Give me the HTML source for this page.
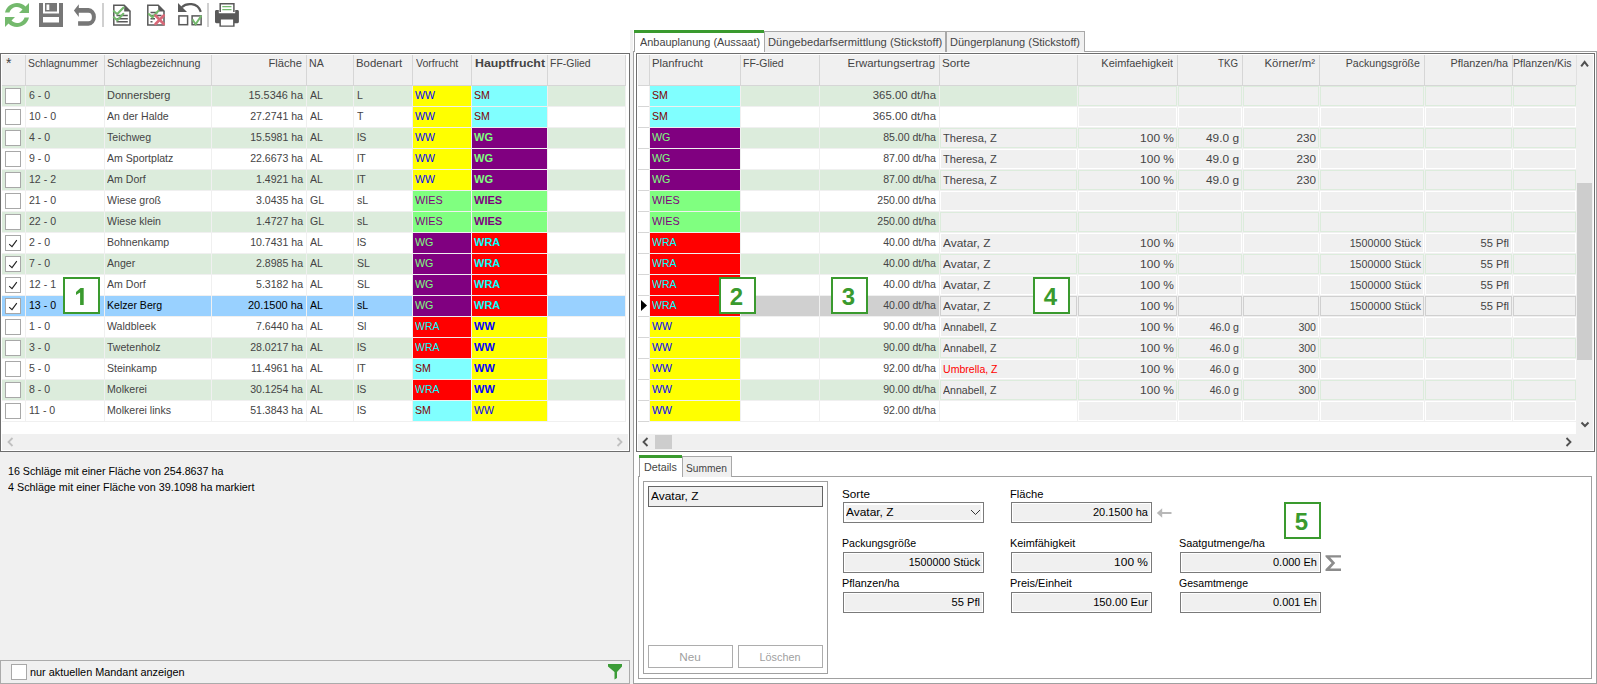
<!DOCTYPE html>
<html><head><meta charset="utf-8"><style>
html,body{margin:0;padding:0;}
body{width:1597px;height:684px;position:relative;overflow:hidden;background:#fff;font-family:"Liberation Sans",sans-serif;font-size:11px;}
body div{position:absolute;}
.t{white-space:pre;line-height:13px;font-size:11px;}
</style></head><body>
<svg style="position:absolute;left:0;top:0" width="260" height="32" viewBox="0 0 260 32">
<g fill="#74b96d">
<path d="M5 12.5 C6.5 6.5 11.5 3 17 3 C20.5 3 23.5 4.5 25.5 6.5 L29 3 L29 13 L19 13 L22.5 9.5 C21 8 19 7 17 7 C13.5 7 10.5 9 9.5 12.5 Z"/>
<path d="M29 17.5 C27.5 23.5 22.5 27 17 27 C13.5 27 10.5 25.5 8.5 23.5 L5 27 L5 17 L15 17 L11.5 20.5 C13 22 15 23 17 23 C20.5 23 23.5 21 24.5 17.5 Z"/>
</g>
<path fill="#777777" fill-rule="evenodd" d="M39 3 H63 V27 H39 Z M43 3 V13.5 H59 V3 Z M45 3 H57 V11.5 H45 Z M43 17 H59 V22.5 H43 Z"/>
<rect x="46.5" y="4.5" width="2.8" height="5.5" fill="#fff"/>
<path fill="#777777" d="M73.9 10.5 L78.8 4.2 L78.8 8.1 L88.5 8.1 A7.4 8.8 0 0 1 88.5 25.7 L78.1 25.7 L78.1 21.3 L88.4 21.3 A3.5 4.3 0 0 0 88.4 12.7 L78.8 12.7 L78.8 16.9 Z"/>
<rect x="102" y="3" width="2" height="24" fill="#d0d0d0"/>
<g fill="none" stroke="#595959" stroke-width="1.5">
<path d="M113.8 5.2 H124.2 L130 11 V25 H113.8 Z"/>
<path d="M116.5 15.4 H127.8 M116.5 18.7 H127.8 M116.5 21.7 H127.8"/>
<path d="M147.8 5.2 H158.2 L164 11 V25 H147.8 Z"/>
<path d="M150.5 12.6 H158 M150.5 15.4 H161.5 M150.5 18.7 H155 M150.5 21.7 H152.5"/>
</g>
<path fill="#595959" d="M124.2 5 L130.6 11.4 L124.2 11.4 Z M158.2 5 L164.6 11.4 L158.2 11.4 Z"/>
<g fill="none" stroke="#74b96d" stroke-width="2.1" stroke-linecap="round">
<path d="M113.8 11.2 L117.3 14 L123.5 7.5"/>
<path d="M113.8 17.3 L117.3 20.2 L123.3 13.8"/>
<path d="M148.8 14 L152.5 17.3 L158.5 10.8"/>
</g>
<path d="M155.5 15.5 L163.8 24 M155.5 24 L163.8 15.5" stroke="#d86878" stroke-width="2.6" stroke-linecap="round"/>
<path fill="#595959" d="M178 3 L178 12 L187 12 Z"/>
<path fill="none" stroke="#595959" stroke-width="2.2" d="M181.8 7.2 C186 3 197.5 1.8 200.8 11.8"/>
<rect x="178.9" y="15.9" width="8.7" height="8.8" fill="none" stroke="#595959" stroke-width="1.5"/>
<rect x="192.1" y="15.9" width="9" height="8.8" fill="none" stroke="#595959" stroke-width="1.5"/>
<path d="M192.4 19.4 L195.6 24.2 L201.4 15.6" fill="none" stroke="#74b96d" stroke-width="1.9"/>
<rect x="207" y="3" width="2" height="24" fill="#d0d0d0"/>
<path d="M220.2 12 V3.7 H233.9 V12" fill="#fff" stroke="#595959" stroke-width="1.5"/>
<path d="M222.3 6.6 H231.5 M222.3 9.7 H231.5" stroke="#74b96d" stroke-width="1.3"/>
<path fill="#595959" d="M216.5 10 H218.8 V13.3 H235.2 V10 H237.5 C238.3 10 238.9 10.6 238.9 11.5 V21.8 C238.9 22.6 238.3 23.2 237.5 23.2 H234 V19 H220 V23.2 H216.5 C215.6 23.2 215 22.6 215 21.8 V11.5 C215 10.6 215.6 10 216.5 10 Z"/>
<path fill="#595959" d="M219.4 18.6 H234.6 V26.8 H219.4 Z M220.9 19.6 V25.4 H233.1 V19.6 Z" fill-rule="evenodd"/>
</svg>
<div style="left:0px;top:452px;width:633px;height:232px;background:#f0f0f0"></div>
<div style="left:630px;top:30px;width:3px;height:654px;background:#f0f0f0"></div>
<div style="left:0px;top:53px;width:630px;height:399px;border:1px solid #6e6e6e;box-sizing:border-box;background:#fff"></div>
<div style="left:2px;top:55px;width:624px;height:30px;background:#f0f0f0"></div>
<div style="left:2px;top:85px;width:624px;height:1px;background:#d6d6d6"></div>
<div style="left:25px;top:55px;width:1px;height:30px;background:#d6d6d6"></div>
<div style="left:104px;top:55px;width:1px;height:30px;background:#d6d6d6"></div>
<div style="left:211px;top:55px;width:1px;height:30px;background:#d6d6d6"></div>
<div style="left:306px;top:55px;width:1px;height:30px;background:#d6d6d6"></div>
<div style="left:353px;top:55px;width:1px;height:30px;background:#d6d6d6"></div>
<div style="left:412px;top:55px;width:1px;height:30px;background:#d6d6d6"></div>
<div style="left:471px;top:55px;width:1px;height:30px;background:#d6d6d6"></div>
<div style="left:547px;top:55px;width:1px;height:30px;background:#d6d6d6"></div>
<div style="left:625px;top:55px;width:1px;height:30px;background:#d6d6d6"></div>
<div class="t" style="left:6px;top:57px;color:#444444;font-size:14px">*</div>
<div class="t" style="left:28px;top:57px;transform:scaleX(0.9444);transform-origin:left top;color:#444444">Schlagnummer</div>
<div class="t" style="left:107px;top:57px;transform:scaleX(0.9734);transform-origin:left top;color:#444444">Schlagbezeichnung</div>
<div class="t" style="left:2px;top:57px;width:300px;text-align:right;transform:scaleX(1.0161);transform-origin:right top;color:#444444">Fläche</div>
<div class="t" style="left:309px;top:57px;transform:scaleX(0.9600);transform-origin:left top;color:#444444">NA</div>
<div class="t" style="left:356px;top:57px;transform:scaleX(1.0349);transform-origin:left top;color:#444444">Bodenart</div>
<div class="t" style="left:416px;top:57px;transform:scaleX(0.9600);transform-origin:left top;color:#444444">Vorfrucht</div>
<div class="t" style="left:475px;top:57px;transform:scaleX(1.1230);transform-origin:left top;color:#444444;font-weight:bold">Hauptfrucht</div>
<div class="t" style="left:550px;top:57px;transform:scaleX(0.9512);transform-origin:left top;color:#444444">FF-Glied</div>
<div style="left:2px;top:86px;width:623px;height:20px;background:#dcecdc"></div>
<div style="left:2px;top:106px;width:624px;height:1px;background:#f0f0f0"></div>
<div style="left:25px;top:86px;width:1px;height:21px;background:#f0f0f0"></div>
<div style="left:104px;top:86px;width:1px;height:21px;background:#f0f0f0"></div>
<div style="left:211px;top:86px;width:1px;height:21px;background:#f0f0f0"></div>
<div style="left:306px;top:86px;width:1px;height:21px;background:#f0f0f0"></div>
<div style="left:353px;top:86px;width:1px;height:21px;background:#f0f0f0"></div>
<div style="left:412px;top:86px;width:1px;height:21px;background:#f0f0f0"></div>
<div style="left:471px;top:86px;width:1px;height:21px;background:#f0f0f0"></div>
<div style="left:547px;top:86px;width:1px;height:21px;background:#f0f0f0"></div>
<div style="left:625px;top:86px;width:1px;height:21px;background:#f0f0f0"></div>
<div style="left:5px;top:88px;width:16px;height:16px;border:1px solid #a8a8a8;box-sizing:border-box;background:#fff"></div>
<div class="t" style="left:29px;top:89px;transform:scaleX(0.9600);transform-origin:left top;color:#444444">6 - 0</div>
<div class="t" style="left:107px;top:89px;transform:scaleX(0.9952);transform-origin:left top;color:#444444">Donnersberg</div>
<div class="t" style="left:3px;top:89px;width:300px;text-align:right;transform:scaleX(0.9907);transform-origin:right top;color:#444444">15.5346 ha</div>
<div class="t" style="left:310px;top:89px;transform:scaleX(0.9600);transform-origin:left top;color:#444444">AL</div>
<div class="t" style="left:357px;top:89px;transform:scaleX(0.9600);transform-origin:left top;color:#444444">L</div>
<div style="left:413px;top:86px;width:58px;height:20px;background:#ffff00"></div>
<div class="t" style="left:415px;top:89px;transform:scaleX(0.9600);transform-origin:left top;color:#0000ff">WW</div>
<div style="left:472px;top:86px;width:75px;height:20px;background:#80ffff"></div>
<div class="t" style="left:474px;top:89px;transform:scaleX(0.9600);transform-origin:left top;color:#7f0000;">SM</div>
<div style="left:2px;top:107px;width:623px;height:20px;background:#ffffff"></div>
<div style="left:2px;top:127px;width:624px;height:1px;background:#f0f0f0"></div>
<div style="left:25px;top:107px;width:1px;height:21px;background:#f0f0f0"></div>
<div style="left:104px;top:107px;width:1px;height:21px;background:#f0f0f0"></div>
<div style="left:211px;top:107px;width:1px;height:21px;background:#f0f0f0"></div>
<div style="left:306px;top:107px;width:1px;height:21px;background:#f0f0f0"></div>
<div style="left:353px;top:107px;width:1px;height:21px;background:#f0f0f0"></div>
<div style="left:412px;top:107px;width:1px;height:21px;background:#f0f0f0"></div>
<div style="left:471px;top:107px;width:1px;height:21px;background:#f0f0f0"></div>
<div style="left:547px;top:107px;width:1px;height:21px;background:#f0f0f0"></div>
<div style="left:625px;top:107px;width:1px;height:21px;background:#f0f0f0"></div>
<div style="left:5px;top:109px;width:16px;height:16px;border:1px solid #a8a8a8;box-sizing:border-box;background:#fff"></div>
<div class="t" style="left:29px;top:110px;transform:scaleX(0.9600);transform-origin:left top;color:#444444">10 - 0</div>
<div class="t" style="left:107px;top:110px;transform:scaleX(0.9600);transform-origin:left top;color:#444444">An der Halde</div>
<div class="t" style="left:3px;top:110px;width:300px;text-align:right;transform:scaleX(0.9600);transform-origin:right top;color:#444444">27.2741 ha</div>
<div class="t" style="left:310px;top:110px;transform:scaleX(0.9600);transform-origin:left top;color:#444444">AL</div>
<div class="t" style="left:357px;top:110px;transform:scaleX(0.9600);transform-origin:left top;color:#444444">T</div>
<div style="left:413px;top:107px;width:58px;height:20px;background:#ffff00"></div>
<div class="t" style="left:415px;top:110px;transform:scaleX(0.9600);transform-origin:left top;color:#0000ff">WW</div>
<div style="left:472px;top:107px;width:75px;height:20px;background:#80ffff"></div>
<div class="t" style="left:474px;top:110px;transform:scaleX(0.9600);transform-origin:left top;color:#7f0000;">SM</div>
<div style="left:2px;top:128px;width:623px;height:20px;background:#dcecdc"></div>
<div style="left:2px;top:148px;width:624px;height:1px;background:#f0f0f0"></div>
<div style="left:25px;top:128px;width:1px;height:21px;background:#f0f0f0"></div>
<div style="left:104px;top:128px;width:1px;height:21px;background:#f0f0f0"></div>
<div style="left:211px;top:128px;width:1px;height:21px;background:#f0f0f0"></div>
<div style="left:306px;top:128px;width:1px;height:21px;background:#f0f0f0"></div>
<div style="left:353px;top:128px;width:1px;height:21px;background:#f0f0f0"></div>
<div style="left:412px;top:128px;width:1px;height:21px;background:#f0f0f0"></div>
<div style="left:471px;top:128px;width:1px;height:21px;background:#f0f0f0"></div>
<div style="left:547px;top:128px;width:1px;height:21px;background:#f0f0f0"></div>
<div style="left:625px;top:128px;width:1px;height:21px;background:#f0f0f0"></div>
<div style="left:5px;top:130px;width:16px;height:16px;border:1px solid #a8a8a8;box-sizing:border-box;background:#fff"></div>
<div class="t" style="left:29px;top:131px;transform:scaleX(0.9600);transform-origin:left top;color:#444444">4 - 0</div>
<div class="t" style="left:107px;top:131px;transform:scaleX(0.9600);transform-origin:left top;color:#444444">Teichweg</div>
<div class="t" style="left:3px;top:131px;width:300px;text-align:right;transform:scaleX(0.9600);transform-origin:right top;color:#444444">15.5981 ha</div>
<div class="t" style="left:310px;top:131px;transform:scaleX(0.9600);transform-origin:left top;color:#444444">AL</div>
<div class="t" style="left:357px;top:131px;transform:scaleX(0.9600);transform-origin:left top;color:#444444">lS</div>
<div style="left:413px;top:128px;width:58px;height:20px;background:#ffff00"></div>
<div class="t" style="left:415px;top:131px;transform:scaleX(0.9600);transform-origin:left top;color:#0000ff">WW</div>
<div style="left:472px;top:128px;width:75px;height:20px;background:#800080"></div>
<div class="t" style="left:474px;top:131px;color:#7fff7f;font-weight:bold">WG</div>
<div style="left:2px;top:149px;width:623px;height:20px;background:#ffffff"></div>
<div style="left:2px;top:169px;width:624px;height:1px;background:#f0f0f0"></div>
<div style="left:25px;top:149px;width:1px;height:21px;background:#f0f0f0"></div>
<div style="left:104px;top:149px;width:1px;height:21px;background:#f0f0f0"></div>
<div style="left:211px;top:149px;width:1px;height:21px;background:#f0f0f0"></div>
<div style="left:306px;top:149px;width:1px;height:21px;background:#f0f0f0"></div>
<div style="left:353px;top:149px;width:1px;height:21px;background:#f0f0f0"></div>
<div style="left:412px;top:149px;width:1px;height:21px;background:#f0f0f0"></div>
<div style="left:471px;top:149px;width:1px;height:21px;background:#f0f0f0"></div>
<div style="left:547px;top:149px;width:1px;height:21px;background:#f0f0f0"></div>
<div style="left:625px;top:149px;width:1px;height:21px;background:#f0f0f0"></div>
<div style="left:5px;top:151px;width:16px;height:16px;border:1px solid #a8a8a8;box-sizing:border-box;background:#fff"></div>
<div class="t" style="left:29px;top:152px;transform:scaleX(0.9600);transform-origin:left top;color:#444444">9 - 0</div>
<div class="t" style="left:107px;top:152px;transform:scaleX(0.9600);transform-origin:left top;color:#444444">Am Sportplatz</div>
<div class="t" style="left:3px;top:152px;width:300px;text-align:right;transform:scaleX(0.9600);transform-origin:right top;color:#444444">22.6673 ha</div>
<div class="t" style="left:310px;top:152px;transform:scaleX(0.9600);transform-origin:left top;color:#444444">AL</div>
<div class="t" style="left:357px;top:152px;transform:scaleX(0.9600);transform-origin:left top;color:#444444">lT</div>
<div style="left:413px;top:149px;width:58px;height:20px;background:#ffff00"></div>
<div class="t" style="left:415px;top:152px;transform:scaleX(0.9600);transform-origin:left top;color:#0000ff">WW</div>
<div style="left:472px;top:149px;width:75px;height:20px;background:#800080"></div>
<div class="t" style="left:474px;top:152px;color:#7fff7f;font-weight:bold">WG</div>
<div style="left:2px;top:170px;width:623px;height:20px;background:#dcecdc"></div>
<div style="left:2px;top:190px;width:624px;height:1px;background:#f0f0f0"></div>
<div style="left:25px;top:170px;width:1px;height:21px;background:#f0f0f0"></div>
<div style="left:104px;top:170px;width:1px;height:21px;background:#f0f0f0"></div>
<div style="left:211px;top:170px;width:1px;height:21px;background:#f0f0f0"></div>
<div style="left:306px;top:170px;width:1px;height:21px;background:#f0f0f0"></div>
<div style="left:353px;top:170px;width:1px;height:21px;background:#f0f0f0"></div>
<div style="left:412px;top:170px;width:1px;height:21px;background:#f0f0f0"></div>
<div style="left:471px;top:170px;width:1px;height:21px;background:#f0f0f0"></div>
<div style="left:547px;top:170px;width:1px;height:21px;background:#f0f0f0"></div>
<div style="left:625px;top:170px;width:1px;height:21px;background:#f0f0f0"></div>
<div style="left:5px;top:172px;width:16px;height:16px;border:1px solid #a8a8a8;box-sizing:border-box;background:#fff"></div>
<div class="t" style="left:29px;top:173px;transform:scaleX(0.9600);transform-origin:left top;color:#444444">12 - 2</div>
<div class="t" style="left:107px;top:173px;transform:scaleX(0.9600);transform-origin:left top;color:#444444">Am Dorf</div>
<div class="t" style="left:3px;top:173px;width:300px;text-align:right;transform:scaleX(0.9600);transform-origin:right top;color:#444444">1.4921 ha</div>
<div class="t" style="left:310px;top:173px;transform:scaleX(0.9600);transform-origin:left top;color:#444444">AL</div>
<div class="t" style="left:357px;top:173px;transform:scaleX(0.9600);transform-origin:left top;color:#444444">lT</div>
<div style="left:413px;top:170px;width:58px;height:20px;background:#ffff00"></div>
<div class="t" style="left:415px;top:173px;transform:scaleX(0.9600);transform-origin:left top;color:#0000ff">WW</div>
<div style="left:472px;top:170px;width:75px;height:20px;background:#800080"></div>
<div class="t" style="left:474px;top:173px;color:#7fff7f;font-weight:bold">WG</div>
<div style="left:2px;top:191px;width:623px;height:20px;background:#ffffff"></div>
<div style="left:2px;top:211px;width:624px;height:1px;background:#f0f0f0"></div>
<div style="left:25px;top:191px;width:1px;height:21px;background:#f0f0f0"></div>
<div style="left:104px;top:191px;width:1px;height:21px;background:#f0f0f0"></div>
<div style="left:211px;top:191px;width:1px;height:21px;background:#f0f0f0"></div>
<div style="left:306px;top:191px;width:1px;height:21px;background:#f0f0f0"></div>
<div style="left:353px;top:191px;width:1px;height:21px;background:#f0f0f0"></div>
<div style="left:412px;top:191px;width:1px;height:21px;background:#f0f0f0"></div>
<div style="left:471px;top:191px;width:1px;height:21px;background:#f0f0f0"></div>
<div style="left:547px;top:191px;width:1px;height:21px;background:#f0f0f0"></div>
<div style="left:625px;top:191px;width:1px;height:21px;background:#f0f0f0"></div>
<div style="left:5px;top:193px;width:16px;height:16px;border:1px solid #a8a8a8;box-sizing:border-box;background:#fff"></div>
<div class="t" style="left:29px;top:194px;transform:scaleX(0.9600);transform-origin:left top;color:#444444">21 - 0</div>
<div class="t" style="left:107px;top:194px;transform:scaleX(0.9600);transform-origin:left top;color:#444444">Wiese groß</div>
<div class="t" style="left:3px;top:194px;width:300px;text-align:right;transform:scaleX(0.9600);transform-origin:right top;color:#444444">3.0435 ha</div>
<div class="t" style="left:310px;top:194px;transform:scaleX(0.9600);transform-origin:left top;color:#444444">GL</div>
<div class="t" style="left:357px;top:194px;transform:scaleX(0.9600);transform-origin:left top;color:#444444">sL</div>
<div style="left:413px;top:191px;width:58px;height:20px;background:#80ff80"></div>
<div class="t" style="left:415px;top:194px;transform:scaleX(0.9808);transform-origin:left top;color:#7f007f">WIES</div>
<div style="left:472px;top:191px;width:75px;height:20px;background:#80ff80"></div>
<div class="t" style="left:474px;top:194px;color:#7f007f;font-weight:bold">WIES</div>
<div style="left:2px;top:212px;width:623px;height:20px;background:#dcecdc"></div>
<div style="left:2px;top:232px;width:624px;height:1px;background:#f0f0f0"></div>
<div style="left:25px;top:212px;width:1px;height:21px;background:#f0f0f0"></div>
<div style="left:104px;top:212px;width:1px;height:21px;background:#f0f0f0"></div>
<div style="left:211px;top:212px;width:1px;height:21px;background:#f0f0f0"></div>
<div style="left:306px;top:212px;width:1px;height:21px;background:#f0f0f0"></div>
<div style="left:353px;top:212px;width:1px;height:21px;background:#f0f0f0"></div>
<div style="left:412px;top:212px;width:1px;height:21px;background:#f0f0f0"></div>
<div style="left:471px;top:212px;width:1px;height:21px;background:#f0f0f0"></div>
<div style="left:547px;top:212px;width:1px;height:21px;background:#f0f0f0"></div>
<div style="left:625px;top:212px;width:1px;height:21px;background:#f0f0f0"></div>
<div style="left:5px;top:214px;width:16px;height:16px;border:1px solid #a8a8a8;box-sizing:border-box;background:#fff"></div>
<div class="t" style="left:29px;top:215px;transform:scaleX(0.9600);transform-origin:left top;color:#444444">22 - 0</div>
<div class="t" style="left:107px;top:215px;transform:scaleX(0.9600);transform-origin:left top;color:#444444">Wiese klein</div>
<div class="t" style="left:3px;top:215px;width:300px;text-align:right;transform:scaleX(0.9600);transform-origin:right top;color:#444444">1.4727 ha</div>
<div class="t" style="left:310px;top:215px;transform:scaleX(0.9600);transform-origin:left top;color:#444444">GL</div>
<div class="t" style="left:357px;top:215px;transform:scaleX(0.9600);transform-origin:left top;color:#444444">sL</div>
<div style="left:413px;top:212px;width:58px;height:20px;background:#80ff80"></div>
<div class="t" style="left:415px;top:215px;transform:scaleX(0.9808);transform-origin:left top;color:#7f007f">WIES</div>
<div style="left:472px;top:212px;width:75px;height:20px;background:#80ff80"></div>
<div class="t" style="left:474px;top:215px;color:#7f007f;font-weight:bold">WIES</div>
<div style="left:2px;top:233px;width:623px;height:20px;background:#ffffff"></div>
<div style="left:2px;top:253px;width:624px;height:1px;background:#f0f0f0"></div>
<div style="left:25px;top:233px;width:1px;height:21px;background:#f0f0f0"></div>
<div style="left:104px;top:233px;width:1px;height:21px;background:#f0f0f0"></div>
<div style="left:211px;top:233px;width:1px;height:21px;background:#f0f0f0"></div>
<div style="left:306px;top:233px;width:1px;height:21px;background:#f0f0f0"></div>
<div style="left:353px;top:233px;width:1px;height:21px;background:#f0f0f0"></div>
<div style="left:412px;top:233px;width:1px;height:21px;background:#f0f0f0"></div>
<div style="left:471px;top:233px;width:1px;height:21px;background:#f0f0f0"></div>
<div style="left:547px;top:233px;width:1px;height:21px;background:#f0f0f0"></div>
<div style="left:625px;top:233px;width:1px;height:21px;background:#f0f0f0"></div>
<div style="left:5px;top:235px;width:16px;height:16px;border:1px solid #a8a8a8;box-sizing:border-box;background:#fff"></div>
<svg style="position:absolute;left:5px;top:235px" width="16" height="16"><path d="M4.2 9.2 L7 11.6 L11.8 5.2" fill="none" stroke="#222" stroke-width="1.1"/></svg>
<div class="t" style="left:29px;top:236px;transform:scaleX(0.9600);transform-origin:left top;color:#444444">2 - 0</div>
<div class="t" style="left:107px;top:236px;transform:scaleX(0.9600);transform-origin:left top;color:#444444">Bohnenkamp</div>
<div class="t" style="left:3px;top:236px;width:300px;text-align:right;transform:scaleX(0.9600);transform-origin:right top;color:#444444">10.7431 ha</div>
<div class="t" style="left:310px;top:236px;transform:scaleX(0.9600);transform-origin:left top;color:#444444">AL</div>
<div class="t" style="left:357px;top:236px;transform:scaleX(0.9600);transform-origin:left top;color:#444444">lS</div>
<div style="left:413px;top:233px;width:58px;height:20px;background:#800080"></div>
<div class="t" style="left:415px;top:236px;transform:scaleX(0.9706);transform-origin:left top;color:#7fff7f">WG</div>
<div style="left:472px;top:233px;width:75px;height:20px;background:#ff0000"></div>
<div class="t" style="left:474px;top:236px;color:#00ffff;font-weight:bold">WRA</div>
<div style="left:2px;top:254px;width:623px;height:20px;background:#dcecdc"></div>
<div style="left:2px;top:274px;width:624px;height:1px;background:#f0f0f0"></div>
<div style="left:25px;top:254px;width:1px;height:21px;background:#f0f0f0"></div>
<div style="left:104px;top:254px;width:1px;height:21px;background:#f0f0f0"></div>
<div style="left:211px;top:254px;width:1px;height:21px;background:#f0f0f0"></div>
<div style="left:306px;top:254px;width:1px;height:21px;background:#f0f0f0"></div>
<div style="left:353px;top:254px;width:1px;height:21px;background:#f0f0f0"></div>
<div style="left:412px;top:254px;width:1px;height:21px;background:#f0f0f0"></div>
<div style="left:471px;top:254px;width:1px;height:21px;background:#f0f0f0"></div>
<div style="left:547px;top:254px;width:1px;height:21px;background:#f0f0f0"></div>
<div style="left:625px;top:254px;width:1px;height:21px;background:#f0f0f0"></div>
<div style="left:5px;top:256px;width:16px;height:16px;border:1px solid #a8a8a8;box-sizing:border-box;background:#fff"></div>
<svg style="position:absolute;left:5px;top:256px" width="16" height="16"><path d="M4.2 9.2 L7 11.6 L11.8 5.2" fill="none" stroke="#222" stroke-width="1.1"/></svg>
<div class="t" style="left:29px;top:257px;transform:scaleX(0.9600);transform-origin:left top;color:#444444">7 - 0</div>
<div class="t" style="left:107px;top:257px;transform:scaleX(0.9600);transform-origin:left top;color:#444444">Anger</div>
<div class="t" style="left:3px;top:257px;width:300px;text-align:right;transform:scaleX(0.9600);transform-origin:right top;color:#444444">2.8985 ha</div>
<div class="t" style="left:310px;top:257px;transform:scaleX(0.9600);transform-origin:left top;color:#444444">AL</div>
<div class="t" style="left:357px;top:257px;transform:scaleX(0.9600);transform-origin:left top;color:#444444">SL</div>
<div style="left:413px;top:254px;width:58px;height:20px;background:#800080"></div>
<div class="t" style="left:415px;top:257px;transform:scaleX(0.9706);transform-origin:left top;color:#7fff7f">WG</div>
<div style="left:472px;top:254px;width:75px;height:20px;background:#ff0000"></div>
<div class="t" style="left:474px;top:257px;color:#00ffff;font-weight:bold">WRA</div>
<div style="left:2px;top:275px;width:623px;height:20px;background:#ffffff"></div>
<div style="left:2px;top:295px;width:624px;height:1px;background:#f0f0f0"></div>
<div style="left:25px;top:275px;width:1px;height:21px;background:#f0f0f0"></div>
<div style="left:104px;top:275px;width:1px;height:21px;background:#f0f0f0"></div>
<div style="left:211px;top:275px;width:1px;height:21px;background:#f0f0f0"></div>
<div style="left:306px;top:275px;width:1px;height:21px;background:#f0f0f0"></div>
<div style="left:353px;top:275px;width:1px;height:21px;background:#f0f0f0"></div>
<div style="left:412px;top:275px;width:1px;height:21px;background:#f0f0f0"></div>
<div style="left:471px;top:275px;width:1px;height:21px;background:#f0f0f0"></div>
<div style="left:547px;top:275px;width:1px;height:21px;background:#f0f0f0"></div>
<div style="left:625px;top:275px;width:1px;height:21px;background:#f0f0f0"></div>
<div style="left:5px;top:277px;width:16px;height:16px;border:1px solid #a8a8a8;box-sizing:border-box;background:#fff"></div>
<svg style="position:absolute;left:5px;top:277px" width="16" height="16"><path d="M4.2 9.2 L7 11.6 L11.8 5.2" fill="none" stroke="#222" stroke-width="1.1"/></svg>
<div class="t" style="left:29px;top:278px;transform:scaleX(0.9600);transform-origin:left top;color:#444444">12 - 1</div>
<div class="t" style="left:107px;top:278px;transform:scaleX(0.9600);transform-origin:left top;color:#444444">Am Dorf</div>
<div class="t" style="left:3px;top:278px;width:300px;text-align:right;transform:scaleX(0.9600);transform-origin:right top;color:#444444">5.3182 ha</div>
<div class="t" style="left:310px;top:278px;transform:scaleX(0.9600);transform-origin:left top;color:#444444">AL</div>
<div class="t" style="left:357px;top:278px;transform:scaleX(0.9600);transform-origin:left top;color:#444444">SL</div>
<div style="left:413px;top:275px;width:58px;height:20px;background:#800080"></div>
<div class="t" style="left:415px;top:278px;transform:scaleX(0.9706);transform-origin:left top;color:#7fff7f">WG</div>
<div style="left:472px;top:275px;width:75px;height:20px;background:#ff0000"></div>
<div class="t" style="left:474px;top:278px;color:#00ffff;font-weight:bold">WRA</div>
<div style="left:2px;top:296px;width:623px;height:20px;background:#99d1ff"></div>
<div style="left:2px;top:316px;width:624px;height:1px;background:#f0f0f0"></div>
<div style="left:25px;top:296px;width:1px;height:21px;background:#f0f0f0"></div>
<div style="left:104px;top:296px;width:1px;height:21px;background:#f0f0f0"></div>
<div style="left:211px;top:296px;width:1px;height:21px;background:#f0f0f0"></div>
<div style="left:306px;top:296px;width:1px;height:21px;background:#f0f0f0"></div>
<div style="left:353px;top:296px;width:1px;height:21px;background:#f0f0f0"></div>
<div style="left:412px;top:296px;width:1px;height:21px;background:#f0f0f0"></div>
<div style="left:471px;top:296px;width:1px;height:21px;background:#f0f0f0"></div>
<div style="left:547px;top:296px;width:1px;height:21px;background:#f0f0f0"></div>
<div style="left:625px;top:296px;width:1px;height:21px;background:#f0f0f0"></div>
<div style="left:5px;top:298px;width:16px;height:16px;border:1px solid #a8a8a8;box-sizing:border-box;background:#fff"></div>
<svg style="position:absolute;left:5px;top:298px" width="16" height="16"><path d="M4.2 9.2 L7 11.6 L11.8 5.2" fill="none" stroke="#222" stroke-width="1.1"/></svg>
<div class="t" style="left:29px;top:299px;transform:scaleX(0.9600);transform-origin:left top;color:#000">13 - 0</div>
<div class="t" style="left:107px;top:299px;transform:scaleX(0.9600);transform-origin:left top;color:#000">Kelzer Berg</div>
<div class="t" style="left:3px;top:299px;width:300px;text-align:right;color:#000">20.1500 ha</div>
<div class="t" style="left:310px;top:299px;transform:scaleX(0.9600);transform-origin:left top;color:#000">AL</div>
<div class="t" style="left:357px;top:299px;transform:scaleX(0.9600);transform-origin:left top;color:#000">sL</div>
<div style="left:413px;top:296px;width:58px;height:20px;background:#800080"></div>
<div class="t" style="left:415px;top:299px;transform:scaleX(0.9706);transform-origin:left top;color:#7fff7f">WG</div>
<div style="left:472px;top:296px;width:75px;height:20px;background:#ff0000"></div>
<div class="t" style="left:474px;top:299px;color:#00ffff;font-weight:bold">WRA</div>
<div style="left:2px;top:317px;width:623px;height:20px;background:#ffffff"></div>
<div style="left:2px;top:337px;width:624px;height:1px;background:#f0f0f0"></div>
<div style="left:25px;top:317px;width:1px;height:21px;background:#f0f0f0"></div>
<div style="left:104px;top:317px;width:1px;height:21px;background:#f0f0f0"></div>
<div style="left:211px;top:317px;width:1px;height:21px;background:#f0f0f0"></div>
<div style="left:306px;top:317px;width:1px;height:21px;background:#f0f0f0"></div>
<div style="left:353px;top:317px;width:1px;height:21px;background:#f0f0f0"></div>
<div style="left:412px;top:317px;width:1px;height:21px;background:#f0f0f0"></div>
<div style="left:471px;top:317px;width:1px;height:21px;background:#f0f0f0"></div>
<div style="left:547px;top:317px;width:1px;height:21px;background:#f0f0f0"></div>
<div style="left:625px;top:317px;width:1px;height:21px;background:#f0f0f0"></div>
<div style="left:5px;top:319px;width:16px;height:16px;border:1px solid #a8a8a8;box-sizing:border-box;background:#fff"></div>
<div class="t" style="left:29px;top:320px;transform:scaleX(0.9600);transform-origin:left top;color:#444444">1 - 0</div>
<div class="t" style="left:107px;top:320px;transform:scaleX(0.9600);transform-origin:left top;color:#444444">Waldbleek</div>
<div class="t" style="left:3px;top:320px;width:300px;text-align:right;transform:scaleX(0.9600);transform-origin:right top;color:#444444">7.6440 ha</div>
<div class="t" style="left:310px;top:320px;transform:scaleX(0.9600);transform-origin:left top;color:#444444">AL</div>
<div class="t" style="left:357px;top:320px;transform:scaleX(0.9600);transform-origin:left top;color:#444444">Sl</div>
<div style="left:413px;top:317px;width:58px;height:20px;background:#ff0000"></div>
<div class="t" style="left:415px;top:320px;transform:scaleX(0.9600);transform-origin:left top;color:#00ffff">WRA</div>
<div style="left:472px;top:317px;width:75px;height:20px;background:#ffff00"></div>
<div class="t" style="left:474px;top:320px;color:#0000ff;font-weight:bold">WW</div>
<div style="left:2px;top:338px;width:623px;height:20px;background:#dcecdc"></div>
<div style="left:2px;top:358px;width:624px;height:1px;background:#f0f0f0"></div>
<div style="left:25px;top:338px;width:1px;height:21px;background:#f0f0f0"></div>
<div style="left:104px;top:338px;width:1px;height:21px;background:#f0f0f0"></div>
<div style="left:211px;top:338px;width:1px;height:21px;background:#f0f0f0"></div>
<div style="left:306px;top:338px;width:1px;height:21px;background:#f0f0f0"></div>
<div style="left:353px;top:338px;width:1px;height:21px;background:#f0f0f0"></div>
<div style="left:412px;top:338px;width:1px;height:21px;background:#f0f0f0"></div>
<div style="left:471px;top:338px;width:1px;height:21px;background:#f0f0f0"></div>
<div style="left:547px;top:338px;width:1px;height:21px;background:#f0f0f0"></div>
<div style="left:625px;top:338px;width:1px;height:21px;background:#f0f0f0"></div>
<div style="left:5px;top:340px;width:16px;height:16px;border:1px solid #a8a8a8;box-sizing:border-box;background:#fff"></div>
<div class="t" style="left:29px;top:341px;transform:scaleX(0.9600);transform-origin:left top;color:#444444">3 - 0</div>
<div class="t" style="left:107px;top:341px;transform:scaleX(0.9600);transform-origin:left top;color:#444444">Twetenholz</div>
<div class="t" style="left:3px;top:341px;width:300px;text-align:right;transform:scaleX(0.9600);transform-origin:right top;color:#444444">28.0217 ha</div>
<div class="t" style="left:310px;top:341px;transform:scaleX(0.9600);transform-origin:left top;color:#444444">AL</div>
<div class="t" style="left:357px;top:341px;transform:scaleX(0.9600);transform-origin:left top;color:#444444">lS</div>
<div style="left:413px;top:338px;width:58px;height:20px;background:#ff0000"></div>
<div class="t" style="left:415px;top:341px;transform:scaleX(0.9600);transform-origin:left top;color:#00ffff">WRA</div>
<div style="left:472px;top:338px;width:75px;height:20px;background:#ffff00"></div>
<div class="t" style="left:474px;top:341px;color:#0000ff;font-weight:bold">WW</div>
<div style="left:2px;top:359px;width:623px;height:20px;background:#ffffff"></div>
<div style="left:2px;top:379px;width:624px;height:1px;background:#f0f0f0"></div>
<div style="left:25px;top:359px;width:1px;height:21px;background:#f0f0f0"></div>
<div style="left:104px;top:359px;width:1px;height:21px;background:#f0f0f0"></div>
<div style="left:211px;top:359px;width:1px;height:21px;background:#f0f0f0"></div>
<div style="left:306px;top:359px;width:1px;height:21px;background:#f0f0f0"></div>
<div style="left:353px;top:359px;width:1px;height:21px;background:#f0f0f0"></div>
<div style="left:412px;top:359px;width:1px;height:21px;background:#f0f0f0"></div>
<div style="left:471px;top:359px;width:1px;height:21px;background:#f0f0f0"></div>
<div style="left:547px;top:359px;width:1px;height:21px;background:#f0f0f0"></div>
<div style="left:625px;top:359px;width:1px;height:21px;background:#f0f0f0"></div>
<div style="left:5px;top:361px;width:16px;height:16px;border:1px solid #a8a8a8;box-sizing:border-box;background:#fff"></div>
<div class="t" style="left:29px;top:362px;transform:scaleX(0.9600);transform-origin:left top;color:#444444">5 - 0</div>
<div class="t" style="left:107px;top:362px;transform:scaleX(0.9600);transform-origin:left top;color:#444444">Steinkamp</div>
<div class="t" style="left:3px;top:362px;width:300px;text-align:right;transform:scaleX(0.9600);transform-origin:right top;color:#444444">11.4961 ha</div>
<div class="t" style="left:310px;top:362px;transform:scaleX(0.9600);transform-origin:left top;color:#444444">AL</div>
<div class="t" style="left:357px;top:362px;transform:scaleX(0.9600);transform-origin:left top;color:#444444">lT</div>
<div style="left:413px;top:359px;width:58px;height:20px;background:#80ffff"></div>
<div class="t" style="left:415px;top:362px;transform:scaleX(0.9600);transform-origin:left top;color:#7f0000">SM</div>
<div style="left:472px;top:359px;width:75px;height:20px;background:#ffff00"></div>
<div class="t" style="left:474px;top:362px;color:#0000ff;font-weight:bold">WW</div>
<div style="left:2px;top:380px;width:623px;height:20px;background:#dcecdc"></div>
<div style="left:2px;top:400px;width:624px;height:1px;background:#f0f0f0"></div>
<div style="left:25px;top:380px;width:1px;height:21px;background:#f0f0f0"></div>
<div style="left:104px;top:380px;width:1px;height:21px;background:#f0f0f0"></div>
<div style="left:211px;top:380px;width:1px;height:21px;background:#f0f0f0"></div>
<div style="left:306px;top:380px;width:1px;height:21px;background:#f0f0f0"></div>
<div style="left:353px;top:380px;width:1px;height:21px;background:#f0f0f0"></div>
<div style="left:412px;top:380px;width:1px;height:21px;background:#f0f0f0"></div>
<div style="left:471px;top:380px;width:1px;height:21px;background:#f0f0f0"></div>
<div style="left:547px;top:380px;width:1px;height:21px;background:#f0f0f0"></div>
<div style="left:625px;top:380px;width:1px;height:21px;background:#f0f0f0"></div>
<div style="left:5px;top:382px;width:16px;height:16px;border:1px solid #a8a8a8;box-sizing:border-box;background:#fff"></div>
<div class="t" style="left:29px;top:383px;transform:scaleX(0.9600);transform-origin:left top;color:#444444">8 - 0</div>
<div class="t" style="left:107px;top:383px;transform:scaleX(0.9600);transform-origin:left top;color:#444444">Molkerei</div>
<div class="t" style="left:3px;top:383px;width:300px;text-align:right;transform:scaleX(0.9600);transform-origin:right top;color:#444444">30.1254 ha</div>
<div class="t" style="left:310px;top:383px;transform:scaleX(0.9600);transform-origin:left top;color:#444444">AL</div>
<div class="t" style="left:357px;top:383px;transform:scaleX(0.9600);transform-origin:left top;color:#444444">lS</div>
<div style="left:413px;top:380px;width:58px;height:20px;background:#ff0000"></div>
<div class="t" style="left:415px;top:383px;transform:scaleX(0.9600);transform-origin:left top;color:#00ffff">WRA</div>
<div style="left:472px;top:380px;width:75px;height:20px;background:#ffff00"></div>
<div class="t" style="left:474px;top:383px;color:#0000ff;font-weight:bold">WW</div>
<div style="left:2px;top:401px;width:623px;height:20px;background:#ffffff"></div>
<div style="left:2px;top:421px;width:624px;height:1px;background:#f0f0f0"></div>
<div style="left:25px;top:401px;width:1px;height:21px;background:#f0f0f0"></div>
<div style="left:104px;top:401px;width:1px;height:21px;background:#f0f0f0"></div>
<div style="left:211px;top:401px;width:1px;height:21px;background:#f0f0f0"></div>
<div style="left:306px;top:401px;width:1px;height:21px;background:#f0f0f0"></div>
<div style="left:353px;top:401px;width:1px;height:21px;background:#f0f0f0"></div>
<div style="left:412px;top:401px;width:1px;height:21px;background:#f0f0f0"></div>
<div style="left:471px;top:401px;width:1px;height:21px;background:#f0f0f0"></div>
<div style="left:547px;top:401px;width:1px;height:21px;background:#f0f0f0"></div>
<div style="left:625px;top:401px;width:1px;height:21px;background:#f0f0f0"></div>
<div style="left:5px;top:403px;width:16px;height:16px;border:1px solid #a8a8a8;box-sizing:border-box;background:#fff"></div>
<div class="t" style="left:29px;top:404px;transform:scaleX(0.9600);transform-origin:left top;color:#444444">11 - 0</div>
<div class="t" style="left:107px;top:404px;transform:scaleX(0.9600);transform-origin:left top;color:#444444">Molkerei links</div>
<div class="t" style="left:3px;top:404px;width:300px;text-align:right;transform:scaleX(0.9600);transform-origin:right top;color:#444444">51.3843 ha</div>
<div class="t" style="left:310px;top:404px;transform:scaleX(0.9600);transform-origin:left top;color:#444444">AL</div>
<div class="t" style="left:357px;top:404px;transform:scaleX(0.9600);transform-origin:left top;color:#444444">lS</div>
<div style="left:413px;top:401px;width:58px;height:20px;background:#80ffff"></div>
<div class="t" style="left:415px;top:404px;transform:scaleX(0.9600);transform-origin:left top;color:#7f0000">SM</div>
<div style="left:472px;top:401px;width:75px;height:20px;background:#ffff00"></div>
<div class="t" style="left:474px;top:404px;transform:scaleX(0.9600);transform-origin:left top;color:#0000ff;">WW</div>
<div style="left:2px;top:434px;width:626px;height:16px;background:#f0f0f0"></div>
<svg style="position:absolute;left:6px;top:437px" width="9" height="10"><path d="M6.5 1 L2.5 5 L6.5 9" fill="none" stroke="#c0c0c0" stroke-width="1.8"/></svg>
<svg style="position:absolute;left:615px;top:437px" width="9" height="10"><path d="M2.5 1 L6.5 5 L2.5 9" fill="none" stroke="#c0c0c0" stroke-width="1.8"/></svg>
<div class="t" style="left:8px;top:465px;transform:scaleX(0.9727);transform-origin:left top;color:#000">16 Schläge mit einer Fläche von 254.8637 ha</div>
<div class="t" style="left:8px;top:481px;transform:scaleX(0.9780);transform-origin:left top;color:#000">4 Schläge mit einer Fläche von 39.1098 ha markiert</div>
<div style="left:0px;top:660px;width:630px;height:24px;border:1px solid #ababab;box-sizing:border-box;background:#f0f0f0"></div>
<div style="left:11px;top:664px;width:16px;height:16px;border:1px solid #a8a8a8;box-sizing:border-box;background:#fff"></div>
<div class="t" style="left:30px;top:666px;transform:scaleX(0.9871);transform-origin:left top;color:#000">nur aktuellen Mandant anzeigen</div>
<svg style="position:absolute;left:607px;top:663px" width="16" height="17"><path d="M1 1 H15 V3.5 L10 9 V15 L7.5 16.5 V9 L1 3.5 Z" fill="#3c9c38"/></svg>
<div style="left:633px;top:51px;width:1px;height:633px;background:#a0a0a0"></div>
<div style="left:1596px;top:51px;width:1px;height:633px;background:#a0a0a0"></div>
<div style="left:633px;top:683px;width:964px;height:1px;background:#a0a0a0"></div>
<div style="left:633px;top:51px;width:964px;height:1px;background:#a0a0a0"></div>
<div style="left:764px;top:31px;width:182px;height:21px;background:#f0f0f0;border:1px solid #a8a8a8;border-bottom:none;box-sizing:border-box"></div>
<div class="t" style="left:768px;top:36px;transform:scaleX(1.0118);transform-origin:left top;color:#444444">Düngebedarfsermittlung (Stickstoff)</div>
<div style="left:946px;top:31px;width:139px;height:21px;background:#f0f0f0;border:1px solid #a8a8a8;border-bottom:none;box-sizing:border-box"></div>
<div class="t" style="left:950px;top:36px;color:#444444">Düngerplanung (Stickstoff)</div>
<div style="left:634px;top:30px;width:130px;height:22px;background:#fff;border-left:1px solid #a0a0a0;box-sizing:border-box"></div>
<div style="left:634px;top:30px;width:130px;height:3px;background:#3a9a2e"></div>
<div class="t" style="left:640px;top:36px;transform:scaleX(0.9916);transform-origin:left top;color:#444444">Anbauplanung (Aussaat)</div>
<div style="left:636px;top:53px;width:959px;height:399px;border:1px solid #6e6e6e;box-sizing:border-box;background:#fff"></div>
<div style="left:638px;top:55px;width:938px;height:30px;background:#f0f0f0"></div>
<div style="left:638px;top:85px;width:938px;height:1px;background:#d6d6d6"></div>
<div style="left:649px;top:55px;width:1px;height:30px;background:#d6d6d6"></div>
<div style="left:740px;top:55px;width:1px;height:30px;background:#d6d6d6"></div>
<div style="left:819px;top:55px;width:1px;height:30px;background:#d6d6d6"></div>
<div style="left:939px;top:55px;width:1px;height:30px;background:#d6d6d6"></div>
<div style="left:1077px;top:55px;width:1px;height:30px;background:#d6d6d6"></div>
<div style="left:1177px;top:55px;width:1px;height:30px;background:#d6d6d6"></div>
<div style="left:1242px;top:55px;width:1px;height:30px;background:#d6d6d6"></div>
<div style="left:1319px;top:55px;width:1px;height:30px;background:#d6d6d6"></div>
<div style="left:1424px;top:55px;width:1px;height:30px;background:#d6d6d6"></div>
<div style="left:1512px;top:55px;width:1px;height:30px;background:#d6d6d6"></div>
<div class="t" style="left:652px;top:57px;transform:scaleX(1.0271);transform-origin:left top;color:#444444">Planfrucht</div>
<div class="t" style="left:743px;top:57px;transform:scaleX(0.9512);transform-origin:left top;color:#444444">FF-Glied</div>
<div class="t" style="left:635px;top:57px;width:300px;text-align:right;transform:scaleX(1.0366);transform-origin:right top;color:#444444">Erwartungsertrag</div>
<div class="t" style="left:942px;top:57px;transform:scaleX(1.0625);transform-origin:left top;color:#444444">Sorte</div>
<div class="t" style="left:873px;top:57px;width:300px;text-align:right;transform:scaleX(0.9929);transform-origin:right top;color:#444444">Keimfaehigkeit</div>
<div class="t" style="left:938px;top:57px;width:300px;text-align:right;transform:scaleX(0.8810);transform-origin:right top;color:#444444">TKG</div>
<div class="t" style="left:1015px;top:57px;width:300px;text-align:right;transform:scaleX(1.0319);transform-origin:right top;color:#444444">Körner/m²</div>
<div class="t" style="left:1120px;top:57px;width:300px;text-align:right;transform:scaleX(0.9640);transform-origin:right top;color:#444444">Packungsgröße</div>
<div class="t" style="left:1208px;top:57px;width:300px;text-align:right;transform:scaleX(0.9877);transform-origin:right top;color:#444444">Pflanzen/ha</div>
<div class="t" style="left:1513px;top:57px;transform:scaleX(0.9583);transform-origin:left top;color:#444444">Pflanzen/Kis</div>
<div style="left:638px;top:86px;width:11px;height:20px;background:#fff"></div>
<div style="left:638px;top:106px;width:11px;height:1px;background:#d6d6d6"></div>
<div style="left:649px;top:86px;width:1px;height:21px;background:#f0f0f0"></div>
<div style="left:650px;top:86px;width:926px;height:20px;background:#dcecdc"></div>
<div style="left:650px;top:106px;width:926px;height:1px;background:#f0f0f0"></div>
<div style="left:740px;top:86px;width:1px;height:21px;background:#f0f0f0"></div>
<div style="left:819px;top:86px;width:1px;height:21px;background:#f0f0f0"></div>
<div style="left:939px;top:86px;width:1px;height:21px;background:#f0f0f0"></div>
<div style="left:1077px;top:86px;width:1px;height:21px;background:#f0f0f0"></div>
<div style="left:1177px;top:86px;width:1px;height:21px;background:#f0f0f0"></div>
<div style="left:1242px;top:86px;width:1px;height:21px;background:#f0f0f0"></div>
<div style="left:1319px;top:86px;width:1px;height:21px;background:#f0f0f0"></div>
<div style="left:1424px;top:86px;width:1px;height:21px;background:#f0f0f0"></div>
<div style="left:1512px;top:86px;width:1px;height:21px;background:#f0f0f0"></div>
<div style="left:650px;top:86px;width:90px;height:20px;background:#80ffff"></div>
<div class="t" style="left:652px;top:89px;transform:scaleX(0.9600);transform-origin:left top;color:#7f0000">SM</div>
<div class="t" style="left:636px;top:89px;width:300px;text-align:right;transform:scaleX(1.0333);transform-origin:right top;color:#444444">365.00 dt/ha</div>
<div style="left:1078px;top:86px;width:99px;height:20px;background:#f0f0f0;box-shadow:inset 0 0 0 1px #dcecdc"></div>
<div style="left:1178px;top:86px;width:64px;height:20px;background:#f0f0f0;box-shadow:inset 0 0 0 1px #dcecdc"></div>
<div style="left:1243px;top:86px;width:76px;height:20px;background:#f0f0f0;box-shadow:inset 0 0 0 1px #dcecdc"></div>
<div style="left:1320px;top:86px;width:104px;height:20px;background:#f0f0f0;box-shadow:inset 0 0 0 1px #dcecdc"></div>
<div style="left:1425px;top:86px;width:87px;height:20px;background:#f0f0f0;box-shadow:inset 0 0 0 1px #dcecdc"></div>
<div style="left:1513px;top:86px;width:63px;height:20px;background:#f0f0f0;box-shadow:inset 0 0 0 1px #dcecdc"></div>
<div style="left:638px;top:107px;width:11px;height:20px;background:#fff"></div>
<div style="left:638px;top:127px;width:11px;height:1px;background:#d6d6d6"></div>
<div style="left:649px;top:107px;width:1px;height:21px;background:#f0f0f0"></div>
<div style="left:650px;top:107px;width:926px;height:20px;background:#ffffff"></div>
<div style="left:650px;top:127px;width:926px;height:1px;background:#f0f0f0"></div>
<div style="left:740px;top:107px;width:1px;height:21px;background:#f0f0f0"></div>
<div style="left:819px;top:107px;width:1px;height:21px;background:#f0f0f0"></div>
<div style="left:939px;top:107px;width:1px;height:21px;background:#f0f0f0"></div>
<div style="left:1077px;top:107px;width:1px;height:21px;background:#f0f0f0"></div>
<div style="left:1177px;top:107px;width:1px;height:21px;background:#f0f0f0"></div>
<div style="left:1242px;top:107px;width:1px;height:21px;background:#f0f0f0"></div>
<div style="left:1319px;top:107px;width:1px;height:21px;background:#f0f0f0"></div>
<div style="left:1424px;top:107px;width:1px;height:21px;background:#f0f0f0"></div>
<div style="left:1512px;top:107px;width:1px;height:21px;background:#f0f0f0"></div>
<div style="left:650px;top:107px;width:90px;height:20px;background:#80ffff"></div>
<div class="t" style="left:652px;top:110px;transform:scaleX(0.9600);transform-origin:left top;color:#7f0000">SM</div>
<div class="t" style="left:636px;top:110px;width:300px;text-align:right;transform:scaleX(1.0333);transform-origin:right top;color:#444444">365.00 dt/ha</div>
<div style="left:1078px;top:107px;width:99px;height:20px;background:#f0f0f0;box-shadow:inset 0 0 0 1px #ffffff"></div>
<div style="left:1178px;top:107px;width:64px;height:20px;background:#f0f0f0;box-shadow:inset 0 0 0 1px #ffffff"></div>
<div style="left:1243px;top:107px;width:76px;height:20px;background:#f0f0f0;box-shadow:inset 0 0 0 1px #ffffff"></div>
<div style="left:1320px;top:107px;width:104px;height:20px;background:#f0f0f0;box-shadow:inset 0 0 0 1px #ffffff"></div>
<div style="left:1425px;top:107px;width:87px;height:20px;background:#f0f0f0;box-shadow:inset 0 0 0 1px #ffffff"></div>
<div style="left:1513px;top:107px;width:63px;height:20px;background:#f0f0f0;box-shadow:inset 0 0 0 1px #ffffff"></div>
<div style="left:638px;top:128px;width:11px;height:20px;background:#fff"></div>
<div style="left:638px;top:148px;width:11px;height:1px;background:#d6d6d6"></div>
<div style="left:649px;top:128px;width:1px;height:21px;background:#f0f0f0"></div>
<div style="left:650px;top:128px;width:926px;height:20px;background:#dcecdc"></div>
<div style="left:650px;top:148px;width:926px;height:1px;background:#f0f0f0"></div>
<div style="left:740px;top:128px;width:1px;height:21px;background:#f0f0f0"></div>
<div style="left:819px;top:128px;width:1px;height:21px;background:#f0f0f0"></div>
<div style="left:939px;top:128px;width:1px;height:21px;background:#f0f0f0"></div>
<div style="left:1077px;top:128px;width:1px;height:21px;background:#f0f0f0"></div>
<div style="left:1177px;top:128px;width:1px;height:21px;background:#f0f0f0"></div>
<div style="left:1242px;top:128px;width:1px;height:21px;background:#f0f0f0"></div>
<div style="left:1319px;top:128px;width:1px;height:21px;background:#f0f0f0"></div>
<div style="left:1424px;top:128px;width:1px;height:21px;background:#f0f0f0"></div>
<div style="left:1512px;top:128px;width:1px;height:21px;background:#f0f0f0"></div>
<div style="left:650px;top:128px;width:90px;height:20px;background:#800080"></div>
<div class="t" style="left:652px;top:131px;transform:scaleX(0.9706);transform-origin:left top;color:#7fff7f">WG</div>
<div class="t" style="left:636px;top:131px;width:300px;text-align:right;transform:scaleX(0.9600);transform-origin:right top;color:#444444">85.00 dt/ha</div>
<div style="left:940px;top:128px;width:137px;height:20px;background:#f0f0f0;box-shadow:inset 0 0 0 1px #dcecdc"></div>
<div style="left:1078px;top:128px;width:99px;height:20px;background:#f0f0f0;box-shadow:inset 0 0 0 1px #dcecdc"></div>
<div style="left:1178px;top:128px;width:64px;height:20px;background:#f0f0f0;box-shadow:inset 0 0 0 1px #dcecdc"></div>
<div style="left:1243px;top:128px;width:76px;height:20px;background:#f0f0f0;box-shadow:inset 0 0 0 1px #dcecdc"></div>
<div style="left:1320px;top:128px;width:104px;height:20px;background:#f0f0f0;box-shadow:inset 0 0 0 1px #dcecdc"></div>
<div style="left:1425px;top:128px;width:87px;height:20px;background:#f0f0f0;box-shadow:inset 0 0 0 1px #dcecdc"></div>
<div style="left:1513px;top:128px;width:63px;height:20px;background:#f0f0f0;box-shadow:inset 0 0 0 1px #dcecdc"></div>
<div class="t" style="left:943px;top:132px;transform:scaleX(1.0115);transform-origin:left top;color:#444444">Theresa, Z</div>
<div class="t" style="left:874px;top:132px;width:300px;text-align:right;transform:scaleX(1.0862);transform-origin:right top;color:#444444">100 %</div>
<div class="t" style="left:939px;top:132px;width:300px;text-align:right;transform:scaleX(1.0793);transform-origin:right top;color:#444444">49.0 g</div>
<div class="t" style="left:1016px;top:132px;width:300px;text-align:right;transform:scaleX(1.0625);transform-origin:right top;color:#444444">230</div>
<div style="left:638px;top:149px;width:11px;height:20px;background:#fff"></div>
<div style="left:638px;top:169px;width:11px;height:1px;background:#d6d6d6"></div>
<div style="left:649px;top:149px;width:1px;height:21px;background:#f0f0f0"></div>
<div style="left:650px;top:149px;width:926px;height:20px;background:#ffffff"></div>
<div style="left:650px;top:169px;width:926px;height:1px;background:#f0f0f0"></div>
<div style="left:740px;top:149px;width:1px;height:21px;background:#f0f0f0"></div>
<div style="left:819px;top:149px;width:1px;height:21px;background:#f0f0f0"></div>
<div style="left:939px;top:149px;width:1px;height:21px;background:#f0f0f0"></div>
<div style="left:1077px;top:149px;width:1px;height:21px;background:#f0f0f0"></div>
<div style="left:1177px;top:149px;width:1px;height:21px;background:#f0f0f0"></div>
<div style="left:1242px;top:149px;width:1px;height:21px;background:#f0f0f0"></div>
<div style="left:1319px;top:149px;width:1px;height:21px;background:#f0f0f0"></div>
<div style="left:1424px;top:149px;width:1px;height:21px;background:#f0f0f0"></div>
<div style="left:1512px;top:149px;width:1px;height:21px;background:#f0f0f0"></div>
<div style="left:650px;top:149px;width:90px;height:20px;background:#800080"></div>
<div class="t" style="left:652px;top:152px;transform:scaleX(0.9706);transform-origin:left top;color:#7fff7f">WG</div>
<div class="t" style="left:636px;top:152px;width:300px;text-align:right;transform:scaleX(0.9600);transform-origin:right top;color:#444444">87.00 dt/ha</div>
<div style="left:940px;top:149px;width:137px;height:20px;background:#f0f0f0;box-shadow:inset 0 0 0 1px #ffffff"></div>
<div style="left:1078px;top:149px;width:99px;height:20px;background:#f0f0f0;box-shadow:inset 0 0 0 1px #ffffff"></div>
<div style="left:1178px;top:149px;width:64px;height:20px;background:#f0f0f0;box-shadow:inset 0 0 0 1px #ffffff"></div>
<div style="left:1243px;top:149px;width:76px;height:20px;background:#f0f0f0;box-shadow:inset 0 0 0 1px #ffffff"></div>
<div style="left:1320px;top:149px;width:104px;height:20px;background:#f0f0f0;box-shadow:inset 0 0 0 1px #ffffff"></div>
<div style="left:1425px;top:149px;width:87px;height:20px;background:#f0f0f0;box-shadow:inset 0 0 0 1px #ffffff"></div>
<div style="left:1513px;top:149px;width:63px;height:20px;background:#f0f0f0;box-shadow:inset 0 0 0 1px #ffffff"></div>
<div class="t" style="left:943px;top:153px;transform:scaleX(1.0115);transform-origin:left top;color:#444444">Theresa, Z</div>
<div class="t" style="left:874px;top:153px;width:300px;text-align:right;transform:scaleX(1.0862);transform-origin:right top;color:#444444">100 %</div>
<div class="t" style="left:939px;top:153px;width:300px;text-align:right;transform:scaleX(1.0793);transform-origin:right top;color:#444444">49.0 g</div>
<div class="t" style="left:1016px;top:153px;width:300px;text-align:right;transform:scaleX(1.0625);transform-origin:right top;color:#444444">230</div>
<div style="left:638px;top:170px;width:11px;height:20px;background:#fff"></div>
<div style="left:638px;top:190px;width:11px;height:1px;background:#d6d6d6"></div>
<div style="left:649px;top:170px;width:1px;height:21px;background:#f0f0f0"></div>
<div style="left:650px;top:170px;width:926px;height:20px;background:#dcecdc"></div>
<div style="left:650px;top:190px;width:926px;height:1px;background:#f0f0f0"></div>
<div style="left:740px;top:170px;width:1px;height:21px;background:#f0f0f0"></div>
<div style="left:819px;top:170px;width:1px;height:21px;background:#f0f0f0"></div>
<div style="left:939px;top:170px;width:1px;height:21px;background:#f0f0f0"></div>
<div style="left:1077px;top:170px;width:1px;height:21px;background:#f0f0f0"></div>
<div style="left:1177px;top:170px;width:1px;height:21px;background:#f0f0f0"></div>
<div style="left:1242px;top:170px;width:1px;height:21px;background:#f0f0f0"></div>
<div style="left:1319px;top:170px;width:1px;height:21px;background:#f0f0f0"></div>
<div style="left:1424px;top:170px;width:1px;height:21px;background:#f0f0f0"></div>
<div style="left:1512px;top:170px;width:1px;height:21px;background:#f0f0f0"></div>
<div style="left:650px;top:170px;width:90px;height:20px;background:#800080"></div>
<div class="t" style="left:652px;top:173px;transform:scaleX(0.9706);transform-origin:left top;color:#7fff7f">WG</div>
<div class="t" style="left:636px;top:173px;width:300px;text-align:right;transform:scaleX(0.9600);transform-origin:right top;color:#444444">87.00 dt/ha</div>
<div style="left:940px;top:170px;width:137px;height:20px;background:#f0f0f0;box-shadow:inset 0 0 0 1px #dcecdc"></div>
<div style="left:1078px;top:170px;width:99px;height:20px;background:#f0f0f0;box-shadow:inset 0 0 0 1px #dcecdc"></div>
<div style="left:1178px;top:170px;width:64px;height:20px;background:#f0f0f0;box-shadow:inset 0 0 0 1px #dcecdc"></div>
<div style="left:1243px;top:170px;width:76px;height:20px;background:#f0f0f0;box-shadow:inset 0 0 0 1px #dcecdc"></div>
<div style="left:1320px;top:170px;width:104px;height:20px;background:#f0f0f0;box-shadow:inset 0 0 0 1px #dcecdc"></div>
<div style="left:1425px;top:170px;width:87px;height:20px;background:#f0f0f0;box-shadow:inset 0 0 0 1px #dcecdc"></div>
<div style="left:1513px;top:170px;width:63px;height:20px;background:#f0f0f0;box-shadow:inset 0 0 0 1px #dcecdc"></div>
<div class="t" style="left:943px;top:174px;transform:scaleX(1.0115);transform-origin:left top;color:#444444">Theresa, Z</div>
<div class="t" style="left:874px;top:174px;width:300px;text-align:right;transform:scaleX(1.0862);transform-origin:right top;color:#444444">100 %</div>
<div class="t" style="left:939px;top:174px;width:300px;text-align:right;transform:scaleX(1.0793);transform-origin:right top;color:#444444">49.0 g</div>
<div class="t" style="left:1016px;top:174px;width:300px;text-align:right;transform:scaleX(1.0625);transform-origin:right top;color:#444444">230</div>
<div style="left:638px;top:191px;width:11px;height:20px;background:#fff"></div>
<div style="left:638px;top:211px;width:11px;height:1px;background:#d6d6d6"></div>
<div style="left:649px;top:191px;width:1px;height:21px;background:#f0f0f0"></div>
<div style="left:650px;top:191px;width:926px;height:20px;background:#ffffff"></div>
<div style="left:650px;top:211px;width:926px;height:1px;background:#f0f0f0"></div>
<div style="left:740px;top:191px;width:1px;height:21px;background:#f0f0f0"></div>
<div style="left:819px;top:191px;width:1px;height:21px;background:#f0f0f0"></div>
<div style="left:939px;top:191px;width:1px;height:21px;background:#f0f0f0"></div>
<div style="left:1077px;top:191px;width:1px;height:21px;background:#f0f0f0"></div>
<div style="left:1177px;top:191px;width:1px;height:21px;background:#f0f0f0"></div>
<div style="left:1242px;top:191px;width:1px;height:21px;background:#f0f0f0"></div>
<div style="left:1319px;top:191px;width:1px;height:21px;background:#f0f0f0"></div>
<div style="left:1424px;top:191px;width:1px;height:21px;background:#f0f0f0"></div>
<div style="left:1512px;top:191px;width:1px;height:21px;background:#f0f0f0"></div>
<div style="left:650px;top:191px;width:90px;height:20px;background:#80ff80"></div>
<div class="t" style="left:652px;top:194px;transform:scaleX(0.9808);transform-origin:left top;color:#7f007f">WIES</div>
<div class="t" style="left:636px;top:194px;width:300px;text-align:right;transform:scaleX(0.9600);transform-origin:right top;color:#444444">250.00 dt/ha</div>
<div style="left:940px;top:191px;width:137px;height:20px;background:#f0f0f0;box-shadow:inset 0 0 0 1px #ffffff"></div>
<div style="left:1078px;top:191px;width:99px;height:20px;background:#f0f0f0;box-shadow:inset 0 0 0 1px #ffffff"></div>
<div style="left:1178px;top:191px;width:64px;height:20px;background:#f0f0f0;box-shadow:inset 0 0 0 1px #ffffff"></div>
<div style="left:1243px;top:191px;width:76px;height:20px;background:#f0f0f0;box-shadow:inset 0 0 0 1px #ffffff"></div>
<div style="left:1320px;top:191px;width:104px;height:20px;background:#f0f0f0;box-shadow:inset 0 0 0 1px #ffffff"></div>
<div style="left:1425px;top:191px;width:87px;height:20px;background:#f0f0f0;box-shadow:inset 0 0 0 1px #ffffff"></div>
<div style="left:1513px;top:191px;width:63px;height:20px;background:#f0f0f0;box-shadow:inset 0 0 0 1px #ffffff"></div>
<div style="left:638px;top:212px;width:11px;height:20px;background:#fff"></div>
<div style="left:638px;top:232px;width:11px;height:1px;background:#d6d6d6"></div>
<div style="left:649px;top:212px;width:1px;height:21px;background:#f0f0f0"></div>
<div style="left:650px;top:212px;width:926px;height:20px;background:#dcecdc"></div>
<div style="left:650px;top:232px;width:926px;height:1px;background:#f0f0f0"></div>
<div style="left:740px;top:212px;width:1px;height:21px;background:#f0f0f0"></div>
<div style="left:819px;top:212px;width:1px;height:21px;background:#f0f0f0"></div>
<div style="left:939px;top:212px;width:1px;height:21px;background:#f0f0f0"></div>
<div style="left:1077px;top:212px;width:1px;height:21px;background:#f0f0f0"></div>
<div style="left:1177px;top:212px;width:1px;height:21px;background:#f0f0f0"></div>
<div style="left:1242px;top:212px;width:1px;height:21px;background:#f0f0f0"></div>
<div style="left:1319px;top:212px;width:1px;height:21px;background:#f0f0f0"></div>
<div style="left:1424px;top:212px;width:1px;height:21px;background:#f0f0f0"></div>
<div style="left:1512px;top:212px;width:1px;height:21px;background:#f0f0f0"></div>
<div style="left:650px;top:212px;width:90px;height:20px;background:#80ff80"></div>
<div class="t" style="left:652px;top:215px;transform:scaleX(0.9808);transform-origin:left top;color:#7f007f">WIES</div>
<div class="t" style="left:636px;top:215px;width:300px;text-align:right;transform:scaleX(0.9600);transform-origin:right top;color:#444444">250.00 dt/ha</div>
<div style="left:940px;top:212px;width:137px;height:20px;background:#f0f0f0;box-shadow:inset 0 0 0 1px #dcecdc"></div>
<div style="left:1078px;top:212px;width:99px;height:20px;background:#f0f0f0;box-shadow:inset 0 0 0 1px #dcecdc"></div>
<div style="left:1178px;top:212px;width:64px;height:20px;background:#f0f0f0;box-shadow:inset 0 0 0 1px #dcecdc"></div>
<div style="left:1243px;top:212px;width:76px;height:20px;background:#f0f0f0;box-shadow:inset 0 0 0 1px #dcecdc"></div>
<div style="left:1320px;top:212px;width:104px;height:20px;background:#f0f0f0;box-shadow:inset 0 0 0 1px #dcecdc"></div>
<div style="left:1425px;top:212px;width:87px;height:20px;background:#f0f0f0;box-shadow:inset 0 0 0 1px #dcecdc"></div>
<div style="left:1513px;top:212px;width:63px;height:20px;background:#f0f0f0;box-shadow:inset 0 0 0 1px #dcecdc"></div>
<div style="left:638px;top:233px;width:11px;height:20px;background:#fff"></div>
<div style="left:638px;top:253px;width:11px;height:1px;background:#d6d6d6"></div>
<div style="left:649px;top:233px;width:1px;height:21px;background:#f0f0f0"></div>
<div style="left:650px;top:233px;width:926px;height:20px;background:#ffffff"></div>
<div style="left:650px;top:253px;width:926px;height:1px;background:#f0f0f0"></div>
<div style="left:740px;top:233px;width:1px;height:21px;background:#f0f0f0"></div>
<div style="left:819px;top:233px;width:1px;height:21px;background:#f0f0f0"></div>
<div style="left:939px;top:233px;width:1px;height:21px;background:#f0f0f0"></div>
<div style="left:1077px;top:233px;width:1px;height:21px;background:#f0f0f0"></div>
<div style="left:1177px;top:233px;width:1px;height:21px;background:#f0f0f0"></div>
<div style="left:1242px;top:233px;width:1px;height:21px;background:#f0f0f0"></div>
<div style="left:1319px;top:233px;width:1px;height:21px;background:#f0f0f0"></div>
<div style="left:1424px;top:233px;width:1px;height:21px;background:#f0f0f0"></div>
<div style="left:1512px;top:233px;width:1px;height:21px;background:#f0f0f0"></div>
<div style="left:650px;top:233px;width:90px;height:20px;background:#ff0000"></div>
<div class="t" style="left:652px;top:236px;transform:scaleX(0.9600);transform-origin:left top;color:#00ffff">WRA</div>
<div class="t" style="left:636px;top:236px;width:300px;text-align:right;transform:scaleX(0.9600);transform-origin:right top;color:#444444">40.00 dt/ha</div>
<div style="left:940px;top:233px;width:137px;height:20px;background:#f0f0f0;box-shadow:inset 0 0 0 1px #ffffff"></div>
<div style="left:1078px;top:233px;width:99px;height:20px;background:#f0f0f0;box-shadow:inset 0 0 0 1px #ffffff"></div>
<div style="left:1178px;top:233px;width:64px;height:20px;background:#f0f0f0;box-shadow:inset 0 0 0 1px #ffffff"></div>
<div style="left:1243px;top:233px;width:76px;height:20px;background:#f0f0f0;box-shadow:inset 0 0 0 1px #ffffff"></div>
<div style="left:1320px;top:233px;width:104px;height:20px;background:#f0f0f0;box-shadow:inset 0 0 0 1px #ffffff"></div>
<div style="left:1425px;top:233px;width:87px;height:20px;background:#f0f0f0;box-shadow:inset 0 0 0 1px #ffffff"></div>
<div style="left:1513px;top:233px;width:63px;height:20px;background:#f0f0f0;box-shadow:inset 0 0 0 1px #ffffff"></div>
<div class="t" style="left:943px;top:237px;transform:scaleX(1.0833);transform-origin:left top;color:#444444">Avatar, Z</div>
<div class="t" style="left:874px;top:237px;width:300px;text-align:right;transform:scaleX(1.0862);transform-origin:right top;color:#444444">100 %</div>
<div class="t" style="left:1121px;top:237px;width:300px;text-align:right;transform:scaleX(0.9722);transform-origin:right top;color:#444444">1500000 Stück</div>
<div class="t" style="left:1209px;top:237px;width:300px;text-align:right;transform:scaleX(1.0115);transform-origin:right top;color:#444444">55 Pfl</div>
<div style="left:638px;top:254px;width:11px;height:20px;background:#fff"></div>
<div style="left:638px;top:274px;width:11px;height:1px;background:#d6d6d6"></div>
<div style="left:649px;top:254px;width:1px;height:21px;background:#f0f0f0"></div>
<div style="left:650px;top:254px;width:926px;height:20px;background:#dcecdc"></div>
<div style="left:650px;top:274px;width:926px;height:1px;background:#f0f0f0"></div>
<div style="left:740px;top:254px;width:1px;height:21px;background:#f0f0f0"></div>
<div style="left:819px;top:254px;width:1px;height:21px;background:#f0f0f0"></div>
<div style="left:939px;top:254px;width:1px;height:21px;background:#f0f0f0"></div>
<div style="left:1077px;top:254px;width:1px;height:21px;background:#f0f0f0"></div>
<div style="left:1177px;top:254px;width:1px;height:21px;background:#f0f0f0"></div>
<div style="left:1242px;top:254px;width:1px;height:21px;background:#f0f0f0"></div>
<div style="left:1319px;top:254px;width:1px;height:21px;background:#f0f0f0"></div>
<div style="left:1424px;top:254px;width:1px;height:21px;background:#f0f0f0"></div>
<div style="left:1512px;top:254px;width:1px;height:21px;background:#f0f0f0"></div>
<div style="left:650px;top:254px;width:90px;height:20px;background:#ff0000"></div>
<div class="t" style="left:652px;top:257px;transform:scaleX(0.9600);transform-origin:left top;color:#00ffff">WRA</div>
<div class="t" style="left:636px;top:257px;width:300px;text-align:right;transform:scaleX(0.9600);transform-origin:right top;color:#444444">40.00 dt/ha</div>
<div style="left:940px;top:254px;width:137px;height:20px;background:#f0f0f0;box-shadow:inset 0 0 0 1px #dcecdc"></div>
<div style="left:1078px;top:254px;width:99px;height:20px;background:#f0f0f0;box-shadow:inset 0 0 0 1px #dcecdc"></div>
<div style="left:1178px;top:254px;width:64px;height:20px;background:#f0f0f0;box-shadow:inset 0 0 0 1px #dcecdc"></div>
<div style="left:1243px;top:254px;width:76px;height:20px;background:#f0f0f0;box-shadow:inset 0 0 0 1px #dcecdc"></div>
<div style="left:1320px;top:254px;width:104px;height:20px;background:#f0f0f0;box-shadow:inset 0 0 0 1px #dcecdc"></div>
<div style="left:1425px;top:254px;width:87px;height:20px;background:#f0f0f0;box-shadow:inset 0 0 0 1px #dcecdc"></div>
<div style="left:1513px;top:254px;width:63px;height:20px;background:#f0f0f0;box-shadow:inset 0 0 0 1px #dcecdc"></div>
<div class="t" style="left:943px;top:258px;transform:scaleX(1.0833);transform-origin:left top;color:#444444">Avatar, Z</div>
<div class="t" style="left:874px;top:258px;width:300px;text-align:right;transform:scaleX(1.0862);transform-origin:right top;color:#444444">100 %</div>
<div class="t" style="left:1121px;top:258px;width:300px;text-align:right;transform:scaleX(0.9722);transform-origin:right top;color:#444444">1500000 Stück</div>
<div class="t" style="left:1209px;top:258px;width:300px;text-align:right;transform:scaleX(1.0115);transform-origin:right top;color:#444444">55 Pfl</div>
<div style="left:638px;top:275px;width:11px;height:20px;background:#fff"></div>
<div style="left:638px;top:295px;width:11px;height:1px;background:#d6d6d6"></div>
<div style="left:649px;top:275px;width:1px;height:21px;background:#f0f0f0"></div>
<div style="left:650px;top:275px;width:926px;height:20px;background:#ffffff"></div>
<div style="left:650px;top:295px;width:926px;height:1px;background:#f0f0f0"></div>
<div style="left:740px;top:275px;width:1px;height:21px;background:#f0f0f0"></div>
<div style="left:819px;top:275px;width:1px;height:21px;background:#f0f0f0"></div>
<div style="left:939px;top:275px;width:1px;height:21px;background:#f0f0f0"></div>
<div style="left:1077px;top:275px;width:1px;height:21px;background:#f0f0f0"></div>
<div style="left:1177px;top:275px;width:1px;height:21px;background:#f0f0f0"></div>
<div style="left:1242px;top:275px;width:1px;height:21px;background:#f0f0f0"></div>
<div style="left:1319px;top:275px;width:1px;height:21px;background:#f0f0f0"></div>
<div style="left:1424px;top:275px;width:1px;height:21px;background:#f0f0f0"></div>
<div style="left:1512px;top:275px;width:1px;height:21px;background:#f0f0f0"></div>
<div style="left:650px;top:275px;width:90px;height:20px;background:#ff0000"></div>
<div class="t" style="left:652px;top:278px;transform:scaleX(0.9600);transform-origin:left top;color:#00ffff">WRA</div>
<div class="t" style="left:636px;top:278px;width:300px;text-align:right;transform:scaleX(0.9600);transform-origin:right top;color:#444444">40.00 dt/ha</div>
<div style="left:940px;top:275px;width:137px;height:20px;background:#f0f0f0;box-shadow:inset 0 0 0 1px #ffffff"></div>
<div style="left:1078px;top:275px;width:99px;height:20px;background:#f0f0f0;box-shadow:inset 0 0 0 1px #ffffff"></div>
<div style="left:1178px;top:275px;width:64px;height:20px;background:#f0f0f0;box-shadow:inset 0 0 0 1px #ffffff"></div>
<div style="left:1243px;top:275px;width:76px;height:20px;background:#f0f0f0;box-shadow:inset 0 0 0 1px #ffffff"></div>
<div style="left:1320px;top:275px;width:104px;height:20px;background:#f0f0f0;box-shadow:inset 0 0 0 1px #ffffff"></div>
<div style="left:1425px;top:275px;width:87px;height:20px;background:#f0f0f0;box-shadow:inset 0 0 0 1px #ffffff"></div>
<div style="left:1513px;top:275px;width:63px;height:20px;background:#f0f0f0;box-shadow:inset 0 0 0 1px #ffffff"></div>
<div class="t" style="left:943px;top:279px;transform:scaleX(1.0833);transform-origin:left top;color:#444444">Avatar, Z</div>
<div class="t" style="left:874px;top:279px;width:300px;text-align:right;transform:scaleX(1.0862);transform-origin:right top;color:#444444">100 %</div>
<div class="t" style="left:1121px;top:279px;width:300px;text-align:right;transform:scaleX(0.9722);transform-origin:right top;color:#444444">1500000 Stück</div>
<div class="t" style="left:1209px;top:279px;width:300px;text-align:right;transform:scaleX(1.0115);transform-origin:right top;color:#444444">55 Pfl</div>
<div style="left:638px;top:296px;width:11px;height:20px;background:#fff"></div>
<div style="left:638px;top:316px;width:11px;height:1px;background:#d6d6d6"></div>
<div style="left:649px;top:296px;width:1px;height:21px;background:#f0f0f0"></div>
<div style="left:650px;top:296px;width:926px;height:20px;background:#d0d0d0"></div>
<div style="left:650px;top:316px;width:926px;height:1px;background:#f0f0f0"></div>
<div style="left:740px;top:296px;width:1px;height:21px;background:#f0f0f0"></div>
<div style="left:819px;top:296px;width:1px;height:21px;background:#f0f0f0"></div>
<div style="left:939px;top:296px;width:1px;height:21px;background:#f0f0f0"></div>
<div style="left:1077px;top:296px;width:1px;height:21px;background:#f0f0f0"></div>
<div style="left:1177px;top:296px;width:1px;height:21px;background:#f0f0f0"></div>
<div style="left:1242px;top:296px;width:1px;height:21px;background:#f0f0f0"></div>
<div style="left:1319px;top:296px;width:1px;height:21px;background:#f0f0f0"></div>
<div style="left:1424px;top:296px;width:1px;height:21px;background:#f0f0f0"></div>
<div style="left:1512px;top:296px;width:1px;height:21px;background:#f0f0f0"></div>
<div style="left:650px;top:296px;width:90px;height:20px;background:#ff0000"></div>
<div class="t" style="left:652px;top:299px;transform:scaleX(0.9600);transform-origin:left top;color:#00ffff">WRA</div>
<div class="t" style="left:636px;top:299px;width:300px;text-align:right;transform:scaleX(0.9600);transform-origin:right top;color:#444444">40.00 dt/ha</div>
<div style="left:940px;top:296px;width:137px;height:20px;background:#f0f0f0;box-shadow:inset 0 0 0 1px #d0d0d0"></div>
<div style="left:1078px;top:296px;width:99px;height:20px;background:#f0f0f0;box-shadow:inset 0 0 0 1px #d0d0d0"></div>
<div style="left:1178px;top:296px;width:64px;height:20px;background:#f0f0f0;box-shadow:inset 0 0 0 1px #d0d0d0"></div>
<div style="left:1243px;top:296px;width:76px;height:20px;background:#f0f0f0;box-shadow:inset 0 0 0 1px #d0d0d0"></div>
<div style="left:1320px;top:296px;width:104px;height:20px;background:#f0f0f0;box-shadow:inset 0 0 0 1px #d0d0d0"></div>
<div style="left:1425px;top:296px;width:87px;height:20px;background:#f0f0f0;box-shadow:inset 0 0 0 1px #d0d0d0"></div>
<div style="left:1513px;top:296px;width:63px;height:20px;background:#f0f0f0;box-shadow:inset 0 0 0 1px #d0d0d0"></div>
<div class="t" style="left:943px;top:300px;transform:scaleX(1.0833);transform-origin:left top;color:#444444">Avatar, Z</div>
<div class="t" style="left:874px;top:300px;width:300px;text-align:right;transform:scaleX(1.0862);transform-origin:right top;color:#444444">100 %</div>
<div class="t" style="left:1121px;top:300px;width:300px;text-align:right;transform:scaleX(0.9722);transform-origin:right top;color:#444444">1500000 Stück</div>
<div class="t" style="left:1209px;top:300px;width:300px;text-align:right;transform:scaleX(1.0115);transform-origin:right top;color:#444444">55 Pfl</div>
<div style="left:638px;top:317px;width:11px;height:20px;background:#fff"></div>
<div style="left:638px;top:337px;width:11px;height:1px;background:#d6d6d6"></div>
<div style="left:649px;top:317px;width:1px;height:21px;background:#f0f0f0"></div>
<div style="left:650px;top:317px;width:926px;height:20px;background:#ffffff"></div>
<div style="left:650px;top:337px;width:926px;height:1px;background:#f0f0f0"></div>
<div style="left:740px;top:317px;width:1px;height:21px;background:#f0f0f0"></div>
<div style="left:819px;top:317px;width:1px;height:21px;background:#f0f0f0"></div>
<div style="left:939px;top:317px;width:1px;height:21px;background:#f0f0f0"></div>
<div style="left:1077px;top:317px;width:1px;height:21px;background:#f0f0f0"></div>
<div style="left:1177px;top:317px;width:1px;height:21px;background:#f0f0f0"></div>
<div style="left:1242px;top:317px;width:1px;height:21px;background:#f0f0f0"></div>
<div style="left:1319px;top:317px;width:1px;height:21px;background:#f0f0f0"></div>
<div style="left:1424px;top:317px;width:1px;height:21px;background:#f0f0f0"></div>
<div style="left:1512px;top:317px;width:1px;height:21px;background:#f0f0f0"></div>
<div style="left:650px;top:317px;width:90px;height:20px;background:#ffff00"></div>
<div class="t" style="left:652px;top:320px;transform:scaleX(0.9600);transform-origin:left top;color:#0000ff">WW</div>
<div class="t" style="left:636px;top:320px;width:300px;text-align:right;transform:scaleX(0.9600);transform-origin:right top;color:#444444">90.00 dt/ha</div>
<div style="left:940px;top:317px;width:137px;height:20px;background:#f0f0f0;box-shadow:inset 0 0 0 1px #ffffff"></div>
<div style="left:1078px;top:317px;width:99px;height:20px;background:#f0f0f0;box-shadow:inset 0 0 0 1px #ffffff"></div>
<div style="left:1178px;top:317px;width:64px;height:20px;background:#f0f0f0;box-shadow:inset 0 0 0 1px #ffffff"></div>
<div style="left:1243px;top:317px;width:76px;height:20px;background:#f0f0f0;box-shadow:inset 0 0 0 1px #ffffff"></div>
<div style="left:1320px;top:317px;width:104px;height:20px;background:#f0f0f0;box-shadow:inset 0 0 0 1px #ffffff"></div>
<div style="left:1425px;top:317px;width:87px;height:20px;background:#f0f0f0;box-shadow:inset 0 0 0 1px #ffffff"></div>
<div style="left:1513px;top:317px;width:63px;height:20px;background:#f0f0f0;box-shadow:inset 0 0 0 1px #ffffff"></div>
<div class="t" style="left:943px;top:321px;transform:scaleX(0.9600);transform-origin:left top;color:#444444">Annabell, Z</div>
<div class="t" style="left:874px;top:321px;width:300px;text-align:right;transform:scaleX(1.0862);transform-origin:right top;color:#444444">100 %</div>
<div class="t" style="left:939px;top:321px;width:300px;text-align:right;transform:scaleX(0.9600);transform-origin:right top;color:#444444">46.0 g</div>
<div class="t" style="left:1016px;top:321px;width:300px;text-align:right;transform:scaleX(0.9600);transform-origin:right top;color:#444444">300</div>
<div style="left:638px;top:338px;width:11px;height:20px;background:#fff"></div>
<div style="left:638px;top:358px;width:11px;height:1px;background:#d6d6d6"></div>
<div style="left:649px;top:338px;width:1px;height:21px;background:#f0f0f0"></div>
<div style="left:650px;top:338px;width:926px;height:20px;background:#dcecdc"></div>
<div style="left:650px;top:358px;width:926px;height:1px;background:#f0f0f0"></div>
<div style="left:740px;top:338px;width:1px;height:21px;background:#f0f0f0"></div>
<div style="left:819px;top:338px;width:1px;height:21px;background:#f0f0f0"></div>
<div style="left:939px;top:338px;width:1px;height:21px;background:#f0f0f0"></div>
<div style="left:1077px;top:338px;width:1px;height:21px;background:#f0f0f0"></div>
<div style="left:1177px;top:338px;width:1px;height:21px;background:#f0f0f0"></div>
<div style="left:1242px;top:338px;width:1px;height:21px;background:#f0f0f0"></div>
<div style="left:1319px;top:338px;width:1px;height:21px;background:#f0f0f0"></div>
<div style="left:1424px;top:338px;width:1px;height:21px;background:#f0f0f0"></div>
<div style="left:1512px;top:338px;width:1px;height:21px;background:#f0f0f0"></div>
<div style="left:650px;top:338px;width:90px;height:20px;background:#ffff00"></div>
<div class="t" style="left:652px;top:341px;transform:scaleX(0.9600);transform-origin:left top;color:#0000ff">WW</div>
<div class="t" style="left:636px;top:341px;width:300px;text-align:right;transform:scaleX(0.9600);transform-origin:right top;color:#444444">90.00 dt/ha</div>
<div style="left:940px;top:338px;width:137px;height:20px;background:#f0f0f0;box-shadow:inset 0 0 0 1px #dcecdc"></div>
<div style="left:1078px;top:338px;width:99px;height:20px;background:#f0f0f0;box-shadow:inset 0 0 0 1px #dcecdc"></div>
<div style="left:1178px;top:338px;width:64px;height:20px;background:#f0f0f0;box-shadow:inset 0 0 0 1px #dcecdc"></div>
<div style="left:1243px;top:338px;width:76px;height:20px;background:#f0f0f0;box-shadow:inset 0 0 0 1px #dcecdc"></div>
<div style="left:1320px;top:338px;width:104px;height:20px;background:#f0f0f0;box-shadow:inset 0 0 0 1px #dcecdc"></div>
<div style="left:1425px;top:338px;width:87px;height:20px;background:#f0f0f0;box-shadow:inset 0 0 0 1px #dcecdc"></div>
<div style="left:1513px;top:338px;width:63px;height:20px;background:#f0f0f0;box-shadow:inset 0 0 0 1px #dcecdc"></div>
<div class="t" style="left:943px;top:342px;transform:scaleX(0.9600);transform-origin:left top;color:#444444">Annabell, Z</div>
<div class="t" style="left:874px;top:342px;width:300px;text-align:right;transform:scaleX(1.0862);transform-origin:right top;color:#444444">100 %</div>
<div class="t" style="left:939px;top:342px;width:300px;text-align:right;transform:scaleX(0.9600);transform-origin:right top;color:#444444">46.0 g</div>
<div class="t" style="left:1016px;top:342px;width:300px;text-align:right;transform:scaleX(0.9600);transform-origin:right top;color:#444444">300</div>
<div style="left:638px;top:359px;width:11px;height:20px;background:#fff"></div>
<div style="left:638px;top:379px;width:11px;height:1px;background:#d6d6d6"></div>
<div style="left:649px;top:359px;width:1px;height:21px;background:#f0f0f0"></div>
<div style="left:650px;top:359px;width:926px;height:20px;background:#ffffff"></div>
<div style="left:650px;top:379px;width:926px;height:1px;background:#f0f0f0"></div>
<div style="left:740px;top:359px;width:1px;height:21px;background:#f0f0f0"></div>
<div style="left:819px;top:359px;width:1px;height:21px;background:#f0f0f0"></div>
<div style="left:939px;top:359px;width:1px;height:21px;background:#f0f0f0"></div>
<div style="left:1077px;top:359px;width:1px;height:21px;background:#f0f0f0"></div>
<div style="left:1177px;top:359px;width:1px;height:21px;background:#f0f0f0"></div>
<div style="left:1242px;top:359px;width:1px;height:21px;background:#f0f0f0"></div>
<div style="left:1319px;top:359px;width:1px;height:21px;background:#f0f0f0"></div>
<div style="left:1424px;top:359px;width:1px;height:21px;background:#f0f0f0"></div>
<div style="left:1512px;top:359px;width:1px;height:21px;background:#f0f0f0"></div>
<div style="left:650px;top:359px;width:90px;height:20px;background:#ffff00"></div>
<div class="t" style="left:652px;top:362px;transform:scaleX(0.9600);transform-origin:left top;color:#0000ff">WW</div>
<div class="t" style="left:636px;top:362px;width:300px;text-align:right;transform:scaleX(0.9600);transform-origin:right top;color:#444444">92.00 dt/ha</div>
<div style="left:940px;top:359px;width:137px;height:20px;background:#f0f0f0;box-shadow:inset 0 0 0 1px #ffffff"></div>
<div style="left:1078px;top:359px;width:99px;height:20px;background:#f0f0f0;box-shadow:inset 0 0 0 1px #ffffff"></div>
<div style="left:1178px;top:359px;width:64px;height:20px;background:#f0f0f0;box-shadow:inset 0 0 0 1px #ffffff"></div>
<div style="left:1243px;top:359px;width:76px;height:20px;background:#f0f0f0;box-shadow:inset 0 0 0 1px #ffffff"></div>
<div style="left:1320px;top:359px;width:104px;height:20px;background:#f0f0f0;box-shadow:inset 0 0 0 1px #ffffff"></div>
<div style="left:1425px;top:359px;width:87px;height:20px;background:#f0f0f0;box-shadow:inset 0 0 0 1px #ffffff"></div>
<div style="left:1513px;top:359px;width:63px;height:20px;background:#f0f0f0;box-shadow:inset 0 0 0 1px #ffffff"></div>
<div class="t" style="left:943px;top:363px;transform:scaleX(0.9600);transform-origin:left top;color:#ff0000">Umbrella, Z</div>
<div class="t" style="left:874px;top:363px;width:300px;text-align:right;transform:scaleX(1.0862);transform-origin:right top;color:#444444">100 %</div>
<div class="t" style="left:939px;top:363px;width:300px;text-align:right;transform:scaleX(0.9600);transform-origin:right top;color:#444444">46.0 g</div>
<div class="t" style="left:1016px;top:363px;width:300px;text-align:right;transform:scaleX(0.9600);transform-origin:right top;color:#444444">300</div>
<div style="left:638px;top:380px;width:11px;height:20px;background:#fff"></div>
<div style="left:638px;top:400px;width:11px;height:1px;background:#d6d6d6"></div>
<div style="left:649px;top:380px;width:1px;height:21px;background:#f0f0f0"></div>
<div style="left:650px;top:380px;width:926px;height:20px;background:#dcecdc"></div>
<div style="left:650px;top:400px;width:926px;height:1px;background:#f0f0f0"></div>
<div style="left:740px;top:380px;width:1px;height:21px;background:#f0f0f0"></div>
<div style="left:819px;top:380px;width:1px;height:21px;background:#f0f0f0"></div>
<div style="left:939px;top:380px;width:1px;height:21px;background:#f0f0f0"></div>
<div style="left:1077px;top:380px;width:1px;height:21px;background:#f0f0f0"></div>
<div style="left:1177px;top:380px;width:1px;height:21px;background:#f0f0f0"></div>
<div style="left:1242px;top:380px;width:1px;height:21px;background:#f0f0f0"></div>
<div style="left:1319px;top:380px;width:1px;height:21px;background:#f0f0f0"></div>
<div style="left:1424px;top:380px;width:1px;height:21px;background:#f0f0f0"></div>
<div style="left:1512px;top:380px;width:1px;height:21px;background:#f0f0f0"></div>
<div style="left:650px;top:380px;width:90px;height:20px;background:#ffff00"></div>
<div class="t" style="left:652px;top:383px;transform:scaleX(0.9600);transform-origin:left top;color:#0000ff">WW</div>
<div class="t" style="left:636px;top:383px;width:300px;text-align:right;transform:scaleX(0.9600);transform-origin:right top;color:#444444">90.00 dt/ha</div>
<div style="left:940px;top:380px;width:137px;height:20px;background:#f0f0f0;box-shadow:inset 0 0 0 1px #dcecdc"></div>
<div style="left:1078px;top:380px;width:99px;height:20px;background:#f0f0f0;box-shadow:inset 0 0 0 1px #dcecdc"></div>
<div style="left:1178px;top:380px;width:64px;height:20px;background:#f0f0f0;box-shadow:inset 0 0 0 1px #dcecdc"></div>
<div style="left:1243px;top:380px;width:76px;height:20px;background:#f0f0f0;box-shadow:inset 0 0 0 1px #dcecdc"></div>
<div style="left:1320px;top:380px;width:104px;height:20px;background:#f0f0f0;box-shadow:inset 0 0 0 1px #dcecdc"></div>
<div style="left:1425px;top:380px;width:87px;height:20px;background:#f0f0f0;box-shadow:inset 0 0 0 1px #dcecdc"></div>
<div style="left:1513px;top:380px;width:63px;height:20px;background:#f0f0f0;box-shadow:inset 0 0 0 1px #dcecdc"></div>
<div class="t" style="left:943px;top:384px;transform:scaleX(0.9600);transform-origin:left top;color:#444444">Annabell, Z</div>
<div class="t" style="left:874px;top:384px;width:300px;text-align:right;transform:scaleX(1.0862);transform-origin:right top;color:#444444">100 %</div>
<div class="t" style="left:939px;top:384px;width:300px;text-align:right;transform:scaleX(0.9600);transform-origin:right top;color:#444444">46.0 g</div>
<div class="t" style="left:1016px;top:384px;width:300px;text-align:right;transform:scaleX(0.9600);transform-origin:right top;color:#444444">300</div>
<div style="left:638px;top:401px;width:11px;height:20px;background:#fff"></div>
<div style="left:638px;top:421px;width:11px;height:1px;background:#d6d6d6"></div>
<div style="left:649px;top:401px;width:1px;height:21px;background:#f0f0f0"></div>
<div style="left:650px;top:401px;width:926px;height:20px;background:#ffffff"></div>
<div style="left:650px;top:421px;width:926px;height:1px;background:#f0f0f0"></div>
<div style="left:740px;top:401px;width:1px;height:21px;background:#f0f0f0"></div>
<div style="left:819px;top:401px;width:1px;height:21px;background:#f0f0f0"></div>
<div style="left:939px;top:401px;width:1px;height:21px;background:#f0f0f0"></div>
<div style="left:1077px;top:401px;width:1px;height:21px;background:#f0f0f0"></div>
<div style="left:1177px;top:401px;width:1px;height:21px;background:#f0f0f0"></div>
<div style="left:1242px;top:401px;width:1px;height:21px;background:#f0f0f0"></div>
<div style="left:1319px;top:401px;width:1px;height:21px;background:#f0f0f0"></div>
<div style="left:1424px;top:401px;width:1px;height:21px;background:#f0f0f0"></div>
<div style="left:1512px;top:401px;width:1px;height:21px;background:#f0f0f0"></div>
<div style="left:650px;top:401px;width:90px;height:20px;background:#ffff00"></div>
<div class="t" style="left:652px;top:404px;transform:scaleX(0.9600);transform-origin:left top;color:#0000ff">WW</div>
<div class="t" style="left:636px;top:404px;width:300px;text-align:right;transform:scaleX(0.9600);transform-origin:right top;color:#444444">92.00 dt/ha</div>
<div style="left:1078px;top:401px;width:99px;height:20px;background:#f0f0f0;box-shadow:inset 0 0 0 1px #ffffff"></div>
<div style="left:1178px;top:401px;width:64px;height:20px;background:#f0f0f0;box-shadow:inset 0 0 0 1px #ffffff"></div>
<div style="left:1243px;top:401px;width:76px;height:20px;background:#f0f0f0;box-shadow:inset 0 0 0 1px #ffffff"></div>
<div style="left:1320px;top:401px;width:104px;height:20px;background:#f0f0f0;box-shadow:inset 0 0 0 1px #ffffff"></div>
<div style="left:1425px;top:401px;width:87px;height:20px;background:#f0f0f0;box-shadow:inset 0 0 0 1px #ffffff"></div>
<div style="left:1513px;top:401px;width:63px;height:20px;background:#f0f0f0;box-shadow:inset 0 0 0 1px #ffffff"></div>
<svg style="position:absolute;left:640px;top:299px" width="8" height="13"><path d="M1 1 L7 6.5 L1 12 Z" fill="#000"/></svg>
<div style="left:1576px;top:55px;width:17px;height:395px;background:#f0f0f0"></div>
<div style="left:1577px;top:183px;width:15px;height:177px;background:#cdcdcd"></div>
<div style="left:1576px;top:55px;width:1px;height:30px;background:#e0e0e0"></div>
<svg style="position:absolute;left:1580px;top:60px" width="10" height="8"><path d="M1.2 6.4 L4.6 2 L8 6.4" fill="none" stroke="#505050" stroke-width="2"/></svg>
<svg style="position:absolute;left:1580px;top:421px" width="10" height="8"><path d="M1.5 1.5 L5 5 L8.5 1.5" fill="none" stroke="#505050" stroke-width="2"/></svg>
<div style="left:638px;top:434px;width:938px;height:16px;background:#f0f0f0"></div>
<div style="left:655px;top:435px;width:17px;height:14px;background:#cdcdcd"></div>
<svg style="position:absolute;left:641px;top:437px" width="9" height="10"><path d="M6.5 1 L2.5 5 L6.5 9" fill="none" stroke="#505050" stroke-width="1.8"/></svg>
<svg style="position:absolute;left:1564px;top:437px" width="9" height="10"><path d="M2.5 1 L6.5 5 L2.5 9" fill="none" stroke="#505050" stroke-width="1.8"/></svg>
<div style="left:638px;top:476px;width:954px;height:203px;border:1px solid #a0a0a0;box-sizing:border-box;background:#fff"></div>
<div style="left:682px;top:456px;width:50px;height:21px;background:#f0f0f0;border:1px solid #a8a8a8;border-bottom:none;box-sizing:border-box"></div>
<div class="t" style="left:686px;top:462px;transform:scaleX(0.9286);transform-origin:left top;color:#444444">Summen</div>
<div style="left:639px;top:455px;width:43px;height:22px;background:#fff;border-left:1px solid #a0a0a0;box-sizing:border-box"></div>
<div style="left:639px;top:455px;width:43px;height:3px;background:#3a9a2e"></div>
<div class="t" style="left:644px;top:461px;transform:scaleX(0.9750);transform-origin:left top;color:#444444">Details</div>
<div style="left:643px;top:481px;width:185px;height:193px;border:1px solid #a0a0a0;box-sizing:border-box;background:#fff"></div>
<div style="left:648px;top:486px;width:175px;height:21px;border:1px solid #646464;box-sizing:border-box;background:#f0f0f0"></div>
<div class="t" style="left:651px;top:490px;transform:scaleX(1.0833);transform-origin:left top;color:#000">Avatar, Z</div>
<div style="left:648px;top:645px;width:85px;height:23px;border:1px solid #adadad;box-sizing:border-box;background:#fff"></div>
<div style="left:738px;top:645px;width:85px;height:23px;border:1px solid #adadad;box-sizing:border-box;background:#fff"></div>
<div class="t" style="left:540px;top:651px;width:300px;text-align:center;transform:scaleX(1.0667);transform-origin:center top;color:#a0a0a0">Neu</div>
<div class="t" style="left:630px;top:651px;width:300px;text-align:center;transform:scaleX(0.9800);transform-origin:center top;color:#a0a0a0">Löschen</div>
<div class="t" style="left:842px;top:488px;transform:scaleX(1.0625);transform-origin:left top;color:#000">Sorte</div>
<div style="left:843px;top:502px;width:141px;height:21px;border:1px solid #7a7a7a;box-sizing:border-box;background:#f0f0f0;box-shadow:inset 0 0 0 2px #fff"></div>
<div class="t" style="left:846px;top:506px;transform:scaleX(1.0833);transform-origin:left top;color:#000">Avatar, Z</div>
<svg style="position:absolute;left:970px;top:509px" width="11" height="7"><path d="M1 1 L5.5 5.5 L10 1" fill="none" stroke="#333" stroke-width="1"/></svg>
<div class="t" style="left:1010px;top:488px;transform:scaleX(1.0161);transform-origin:left top;color:#000">Fläche</div>
<div style="left:1011px;top:502px;width:141px;height:21px;border:1px solid #7a7a7a;box-sizing:border-box;background:#f0f0f0;box-shadow:inset 0 0 0 1px #fff"></div>
<div class="t" style="left:848px;top:506px;width:300px;text-align:right;color:#000">20.1500 ha</div>
<svg style="position:absolute;left:1156px;top:507px" width="17" height="12"><path d="M5 6 H15.5" stroke="#b8b8b8" stroke-width="2"/><path d="M0.8 6 L6.2 1.2 V10.8 Z" fill="#b8b8b8"/></svg>
<div class="t" style="left:842px;top:537px;transform:scaleX(0.9640);transform-origin:left top;color:#000">Packungsgröße</div>
<div style="left:843px;top:552px;width:141px;height:21px;border:1px solid #7a7a7a;box-sizing:border-box;background:#f0f0f0;box-shadow:inset 0 0 0 1px #fff"></div>
<div class="t" style="left:680px;top:556px;width:300px;text-align:right;transform:scaleX(0.9722);transform-origin:right top;color:#000">1500000 Stück</div>
<div class="t" style="left:1010px;top:537px;transform:scaleX(0.9891);transform-origin:left top;color:#000">Keimfähigkeit</div>
<div style="left:1011px;top:552px;width:141px;height:21px;border:1px solid #7a7a7a;box-sizing:border-box;background:#f0f0f0;box-shadow:inset 0 0 0 1px #fff"></div>
<div class="t" style="left:848px;top:556px;width:300px;text-align:right;transform:scaleX(1.0862);transform-origin:right top;color:#000">100 %</div>
<div class="t" style="left:1179px;top:537px;transform:scaleX(0.9884);transform-origin:left top;color:#000">Saatgutmenge/ha</div>
<div style="left:1180px;top:552px;width:141px;height:21px;border:1px solid #7a7a7a;box-sizing:border-box;background:#f0f0f0;box-shadow:inset 0 0 0 1px #fff"></div>
<div class="t" style="left:1017px;top:556px;width:300px;text-align:right;color:#000">0.000 Eh</div>
<div class="t" style="left:842px;top:577px;transform:scaleX(0.9877);transform-origin:left top;color:#000">Pflanzen/ha</div>
<div style="left:843px;top:592px;width:141px;height:21px;border:1px solid #7a7a7a;box-sizing:border-box;background:#f0f0f0;box-shadow:inset 0 0 0 1px #fff"></div>
<div class="t" style="left:680px;top:596px;width:300px;text-align:right;transform:scaleX(1.0115);transform-origin:right top;color:#000">55 Pfl</div>
<div class="t" style="left:1010px;top:577px;color:#000">Preis/Einheit</div>
<div style="left:1011px;top:592px;width:141px;height:21px;border:1px solid #7a7a7a;box-sizing:border-box;background:#f0f0f0;box-shadow:inset 0 0 0 1px #fff"></div>
<div class="t" style="left:848px;top:596px;width:300px;text-align:right;transform:scaleX(1.0192);transform-origin:right top;color:#000">150.00 Eur</div>
<div class="t" style="left:1179px;top:577px;transform:scaleX(0.9571);transform-origin:left top;color:#000">Gesamtmenge</div>
<div style="left:1180px;top:592px;width:141px;height:21px;border:1px solid #7a7a7a;box-sizing:border-box;background:#f0f0f0;box-shadow:inset 0 0 0 1px #fff"></div>
<div class="t" style="left:1017px;top:596px;width:300px;text-align:right;color:#000">0.001 Eh</div>
<svg style="position:absolute;left:1324px;top:554px" width="18" height="18"><path d="M1.5 1.2 H17 V3.4 H6.2 L11.2 9 L6.2 14.6 H17 V17 H1.5 V15.2 L7.6 9 L1.5 2.8 Z" fill="#8c8c8c"/></svg>
<div style="left:63px;top:277px;width:37px;height:37px;border:2px solid #3a9a2e;box-sizing:border-box;background:#fff"></div>
<svg style="position:absolute;left:63px;top:277px" width="37" height="37"><path d="M13 15 L17.5 11 L20.7 11 L20.7 28 L17.1 28 L17.1 15.6 L13 18 Z" fill="#3a9a2e"/></svg>
<div style="left:719px;top:277px;width:37px;height:37px;border:2px solid #3a9a2e;box-sizing:border-box;background:#fff"></div>
<div style="left:718px;top:278px;width:37px;height:37px;font:bold 24px/37px 'Liberation Sans',sans-serif;color:#3a9a2e;text-align:center">2</div>
<div style="left:831px;top:277px;width:37px;height:37px;border:2px solid #3a9a2e;box-sizing:border-box;background:#fff"></div>
<div style="left:830px;top:278px;width:37px;height:37px;font:bold 24px/37px 'Liberation Sans',sans-serif;color:#3a9a2e;text-align:center">3</div>
<div style="left:1033px;top:277px;width:37px;height:37px;border:2px solid #3a9a2e;box-sizing:border-box;background:#fff"></div>
<div style="left:1032px;top:278px;width:37px;height:37px;font:bold 24px/37px 'Liberation Sans',sans-serif;color:#3a9a2e;text-align:center">4</div>
<div style="left:1284px;top:502px;width:37px;height:37px;border:2px solid #3a9a2e;box-sizing:border-box;background:#fff"></div>
<div style="left:1283px;top:503px;width:37px;height:37px;font:bold 24px/37px 'Liberation Sans',sans-serif;color:#3a9a2e;text-align:center">5</div>
</body></html>
